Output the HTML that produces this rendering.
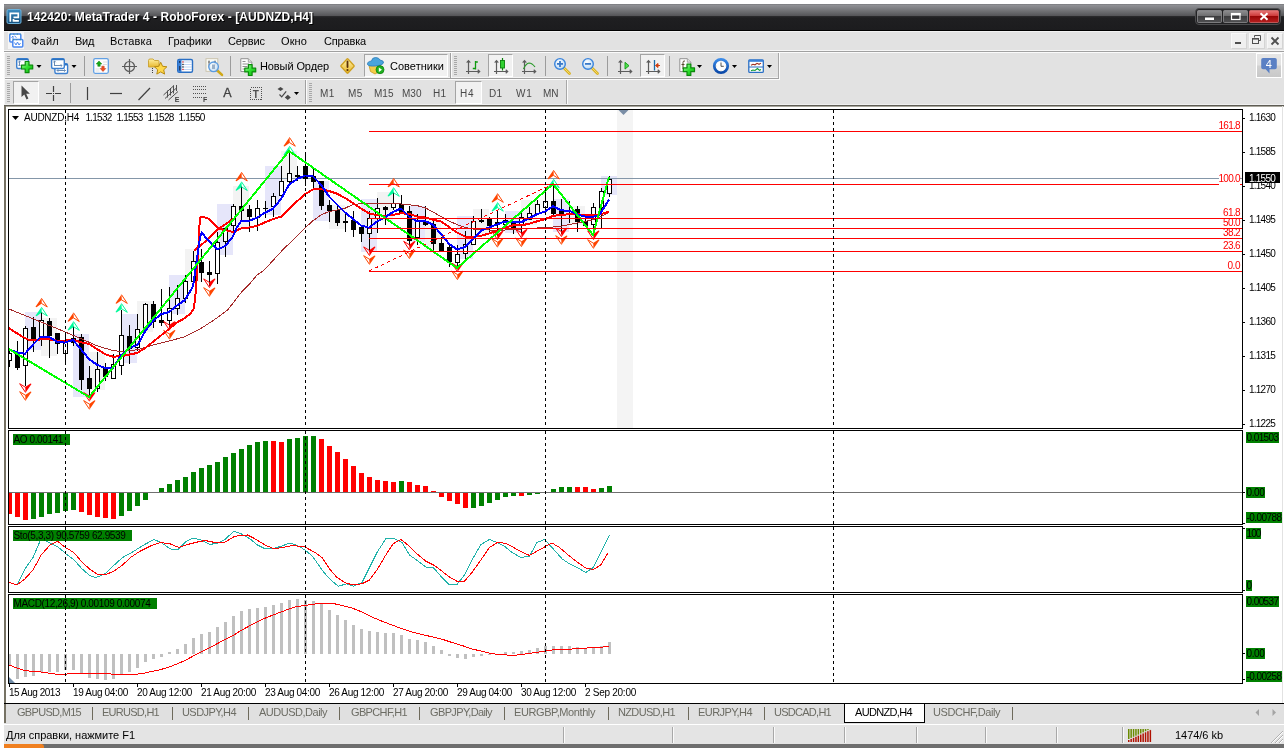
<!DOCTYPE html>
<html lang="ru">
<head>
<meta charset="utf-8">
<title>142420: MetaTrader 4 - RoboForex - [AUDNZD,H4]</title>
<style>
*{box-sizing:border-box;margin:0;padding:0}
html,body{width:1288px;height:748px;overflow:hidden;background:#fff}
body{font-family:"Liberation Sans","DejaVu Sans",sans-serif;font-size:11px;color:#000;position:relative}
#root{position:absolute;left:0;top:0;width:1288px;height:748px;overflow:hidden;will-change:transform}
.a{position:absolute}
.t{position:absolute;white-space:nowrap;z-index:2}
.g{z-index:2}
svg{position:absolute;left:0;top:0}
svg text{font-family:"Liberation Sans","DejaVu Sans",sans-serif}
</style>
</head>
<body>
<div id="root">
<div class="a" style="left:4px;top:4px;width:1280px;height:740px;background:#e2e2e2;"></div>
<div class="a" style="left:4px;top:4px;width:1280px;height:27px;background:linear-gradient(#7a7b7f 0px,#8e8f93 1.5px,#76777a 6px,#57575a 11.5px,#29292b 12.5px,#1f1f21 14px,#1c1c1e 26px,#000 26px,#000 27px)"></div>
<div class="a" style="left:4px;top:31px;width:1280px;height:1px;background:#f2f2f2;"></div>
<div class="a" style="left:4px;top:744px;width:1280px;height:4px;background:#6e6e6e;"></div>
<div class="a" style="left:4px;top:744px;width:40px;height:4px;background:#f08020;border-radius:0 3px 0 0"></div>
<div class="a" style="left:4px;top:50px;width:1280px;height:1px;background:#f6f6f6;"></div>
<div class="a" style="left:4px;top:51px;width:1280px;height:1px;background:#a0a0a0;"></div>
<div class="a" style="left:4px;top:52px;width:1280px;height:1px;background:#fbfbfb;"></div>
<div class="a" style="left:4px;top:77px;width:776px;height:1px;background:#f4f4f4;"></div>
<div class="a" style="left:4px;top:78px;width:775px;height:1px;background:#a0a0a0;"></div>
<div class="a" style="left:4px;top:79px;width:776px;height:1px;background:#fbfbfb;"></div>
<div class="a" style="left:4px;top:53px;width:1px;height:52px;background:#f6f6f6;"></div>
<div class="a" style="left:4px;top:104px;width:1280px;height:1px;background:#f0f0f0;"></div>
<div class="a" style="left:4px;top:105px;width:1280px;height:1px;background:#5e5c54;"></div>
<div class="a" style="left:4px;top:106px;width:1280px;height:597px;background:#ffffff;"></div>
<div class="a" style="left:4px;top:106px;width:1280px;height:1px;background:#a8a69c;"></div>
<div class="a" style="left:4px;top:106px;width:2px;height:597px;background:#767264;"></div>
<div class="a" style="left:1282px;top:106px;width:1px;height:597px;background:#e2e2e2;"></div>
<div class="a" style="left:4px;top:703px;width:1280px;height:1px;background:#000000;"></div>
<div class="a" style="left:4px;top:704px;width:1280px;height:20px;background:#e0e0e0;"></div>
<div class="a" style="left:4px;top:724px;width:1280px;height:1px;background:#ffffff;"></div>
<div class="a" style="left:4px;top:725px;width:1280px;height:19px;background:#e4e4e4;"></div>
<div class="t " style="left:27px;top:9.8px;font-size:12px;line-height:14px;color:#fff;font-weight:bold;letter-spacing:0.06px;text-shadow:1px 1px 0 #000;">142420: MetaTrader 4 - RoboForex - [AUDNZD,H4]</div>
<div class="a" style="left:8px;top:32px;width:16px;height:17px;background:#f5f5f5;"></div>
<div class="t " style="left:31px;top:34.7px;font-size:11px;line-height:13px;color:#000;letter-spacing:0.24px;">Файл</div>
<div class="t " style="left:75px;top:34.7px;font-size:11px;line-height:13px;color:#000;letter-spacing:-0.30px;">Вид</div>
<div class="t " style="left:110px;top:34.7px;font-size:11px;line-height:13px;color:#000;letter-spacing:0.16px;">Вставка</div>
<div class="t " style="left:168px;top:34.7px;font-size:11px;line-height:13px;color:#000;letter-spacing:0.04px;">Графики</div>
<div class="t " style="left:228px;top:34.7px;font-size:11px;line-height:13px;color:#000;letter-spacing:-0.11px;">Сервис</div>
<div class="t " style="left:281px;top:34.7px;font-size:11px;line-height:13px;color:#000;letter-spacing:0.11px;">Окно</div>
<div class="t " style="left:324px;top:34.7px;font-size:11px;line-height:13px;color:#000;letter-spacing:-0.17px;">Справка</div>
<div class="a" style="left:1231px;top:33px;width:16px;height:16px;background:#f0f0f0;border:1px solid #f8f8f8;border-right-color:#d4d4d4;border-bottom-color:#d4d4d4"></div>
<div class="a" style="left:1249px;top:33px;width:16px;height:16px;background:#f0f0f0;border:1px solid #f8f8f8;border-right-color:#d4d4d4;border-bottom-color:#d4d4d4"></div>
<div class="a" style="left:1267px;top:33px;width:16px;height:16px;background:#f0f0f0;border:1px solid #f8f8f8;border-right-color:#d4d4d4;border-bottom-color:#d4d4d4"></div>
<div class="a" style="left:7px;top:56px;width:3px;height:1px;background:#a8a8a8;"></div>
<div class="a" style="left:7px;top:58px;width:3px;height:1px;background:#a8a8a8;"></div>
<div class="a" style="left:7px;top:60px;width:3px;height:1px;background:#a8a8a8;"></div>
<div class="a" style="left:7px;top:62px;width:3px;height:1px;background:#a8a8a8;"></div>
<div class="a" style="left:7px;top:64px;width:3px;height:1px;background:#a8a8a8;"></div>
<div class="a" style="left:7px;top:66px;width:3px;height:1px;background:#a8a8a8;"></div>
<div class="a" style="left:7px;top:68px;width:3px;height:1px;background:#a8a8a8;"></div>
<div class="a" style="left:7px;top:70px;width:3px;height:1px;background:#a8a8a8;"></div>
<div class="a" style="left:7px;top:72px;width:3px;height:1px;background:#a8a8a8;"></div>
<div class="a" style="left:7px;top:74px;width:3px;height:1px;background:#a8a8a8;"></div>
<div class="a" style="left:7px;top:83px;width:3px;height:1px;background:#a8a8a8;"></div>
<div class="a" style="left:7px;top:85px;width:3px;height:1px;background:#a8a8a8;"></div>
<div class="a" style="left:7px;top:87px;width:3px;height:1px;background:#a8a8a8;"></div>
<div class="a" style="left:7px;top:89px;width:3px;height:1px;background:#a8a8a8;"></div>
<div class="a" style="left:7px;top:91px;width:3px;height:1px;background:#a8a8a8;"></div>
<div class="a" style="left:7px;top:93px;width:3px;height:1px;background:#a8a8a8;"></div>
<div class="a" style="left:7px;top:95px;width:3px;height:1px;background:#a8a8a8;"></div>
<div class="a" style="left:7px;top:97px;width:3px;height:1px;background:#a8a8a8;"></div>
<div class="a" style="left:7px;top:99px;width:3px;height:1px;background:#a8a8a8;"></div>
<div class="a" style="left:7px;top:101px;width:3px;height:1px;background:#a8a8a8;"></div>
<div class="a" style="left:778px;top:53px;width:1px;height:25px;background:#a8a8a8;"></div>
<div class="a" style="left:779px;top:53px;width:1px;height:26px;background:#fbfbfb;"></div>
<div class="a" style="left:566px;top:80px;width:1px;height:24px;background:#a8a8a8;"></div>
<div class="a" style="left:567px;top:80px;width:1px;height:24px;background:#fbfbfb;"></div>
<div class="a" style="left:84px;top:56px;width:1px;height:20px;background:#9c9c9c;"></div>
<div class="a" style="left:230px;top:56px;width:1px;height:20px;background:#9c9c9c;"></div>
<div class="a" style="left:450px;top:53px;width:1px;height:25px;background:#a0a0a0;"></div>
<div class="a" style="left:451px;top:53px;width:1px;height:25px;background:#fbfbfb;"></div>
<div class="a" style="left:454px;top:56px;width:3px;height:1px;background:#a8a8a8;"></div>
<div class="a" style="left:454px;top:58px;width:3px;height:1px;background:#a8a8a8;"></div>
<div class="a" style="left:454px;top:60px;width:3px;height:1px;background:#a8a8a8;"></div>
<div class="a" style="left:454px;top:62px;width:3px;height:1px;background:#a8a8a8;"></div>
<div class="a" style="left:454px;top:64px;width:3px;height:1px;background:#a8a8a8;"></div>
<div class="a" style="left:454px;top:66px;width:3px;height:1px;background:#a8a8a8;"></div>
<div class="a" style="left:454px;top:68px;width:3px;height:1px;background:#a8a8a8;"></div>
<div class="a" style="left:454px;top:70px;width:3px;height:1px;background:#a8a8a8;"></div>
<div class="a" style="left:454px;top:72px;width:3px;height:1px;background:#a8a8a8;"></div>
<div class="a" style="left:454px;top:74px;width:3px;height:1px;background:#a8a8a8;"></div>
<div class="a" style="left:545px;top:56px;width:1px;height:20px;background:#9c9c9c;"></div>
<div class="a" style="left:607px;top:56px;width:1px;height:20px;background:#9c9c9c;"></div>
<div class="a" style="left:669px;top:56px;width:1px;height:20px;background:#9c9c9c;"></div>
<div class="a" style="left:70px;top:83px;width:1px;height:20px;background:#9c9c9c;"></div>
<div class="a" style="left:305px;top:80px;width:1px;height:24px;background:#a0a0a0;"></div>
<div class="a" style="left:306px;top:80px;width:1px;height:24px;background:#fbfbfb;"></div>
<div class="a" style="left:309px;top:83px;width:3px;height:1px;background:#a8a8a8;"></div>
<div class="a" style="left:309px;top:85px;width:3px;height:1px;background:#a8a8a8;"></div>
<div class="a" style="left:309px;top:87px;width:3px;height:1px;background:#a8a8a8;"></div>
<div class="a" style="left:309px;top:89px;width:3px;height:1px;background:#a8a8a8;"></div>
<div class="a" style="left:309px;top:91px;width:3px;height:1px;background:#a8a8a8;"></div>
<div class="a" style="left:309px;top:93px;width:3px;height:1px;background:#a8a8a8;"></div>
<div class="a" style="left:309px;top:95px;width:3px;height:1px;background:#a8a8a8;"></div>
<div class="a" style="left:309px;top:97px;width:3px;height:1px;background:#a8a8a8;"></div>
<div class="a" style="left:309px;top:99px;width:3px;height:1px;background:#a8a8a8;"></div>
<div class="a" style="left:309px;top:101px;width:3px;height:1px;background:#a8a8a8;"></div>
<div class="a" style="left:364px;top:54px;width:84px;height:23px;background:#f1f1f1;border:1px solid #fff;border-left-color:#a4a4a4;border-top-color:#a4a4a4"></div>
<div class="a" style="left:488px;top:54px;width:25px;height:23px;background:#f1f1f1;border:1px solid #fff;border-left-color:#a4a4a4;border-top-color:#a4a4a4"></div>
<div class="a" style="left:640px;top:54px;width:25px;height:23px;background:#f1f1f1;border:1px solid #fff;border-left-color:#a4a4a4;border-top-color:#a4a4a4"></div>
<div class="a" style="left:13px;top:81px;width:26px;height:23px;background:#f1f1f1;border:1px solid #fff;border-left-color:#a4a4a4;border-top-color:#a4a4a4"></div>
<div class="a" style="left:455px;top:81px;width:27px;height:23px;background:#f1f1f1;border:1px solid #fff;border-left-color:#a4a4a4;border-top-color:#a4a4a4"></div>
<div class="t " style="left:260px;top:59.7px;font-size:11px;line-height:13px;color:#000;letter-spacing:-0.10px;">Новый Ордер</div>
<div class="t " style="left:390px;top:59.7px;font-size:11px;line-height:13px;color:#000;letter-spacing:0.03px;">Советники</div>
<div class="t " style="left:320px;top:88.3px;font-size:10px;line-height:12px;color:#484848;letter-spacing:0.30px;">M1</div>
<div class="t " style="left:348px;top:88.3px;font-size:10px;line-height:12px;color:#484848;letter-spacing:0.30px;">M5</div>
<div class="t " style="left:374px;top:88.3px;font-size:10px;line-height:12px;color:#484848;letter-spacing:0.02px;">M15</div>
<div class="t " style="left:402px;top:88.3px;font-size:10px;line-height:12px;color:#484848;letter-spacing:0.02px;">M30</div>
<div class="t " style="left:433px;top:88.3px;font-size:10px;line-height:12px;color:#484848;letter-spacing:0.36px;">H1</div>
<div class="t " style="left:460px;top:88.3px;font-size:10px;line-height:12px;color:#484848;letter-spacing:0.86px;">H4</div>
<div class="t " style="left:489px;top:88.3px;font-size:10px;line-height:12px;color:#484848;letter-spacing:0.36px;">D1</div>
<div class="t " style="left:516px;top:88.3px;font-size:10px;line-height:12px;color:#484848;letter-spacing:0.75px;">W1</div>
<div class="t " style="left:543px;top:88.3px;font-size:10px;line-height:12px;color:#484848;letter-spacing:-0.02px;">MN</div>
<div class="a" style="left:1256px;top:53px;width:26px;height:25px;border:1px solid #fff;background:linear-gradient(#e6e6e6 0,#e2e2e2 48%,#d2d2d2 52%,#c8c8c8 100%)"></div>
<div class="t " style="left:1265.7px;top:57.7px;font-size:11px;line-height:13px;color:#fff;">4</div>
<div class="t " style="left:174.8px;top:95.6px;font-size:7px;line-height:8px;color:#404040;font-weight:bold;">E</div>
<div class="t " style="left:203px;top:95.6px;font-size:7px;line-height:8px;color:#404040;font-weight:bold;">F</div>
<div class="t " style="left:223.3px;top:86.4px;font-size:12.5px;line-height:14px;color:#404040;-webkit-text-stroke:0.3px #404040;">A</div>
<div class="t " style="left:252.7px;top:88.5px;font-size:10px;line-height:12px;color:#505050;font-weight:bold;">T</div>
<div class="a" style="left:844px;top:704px;width:81px;height:19px;background:#ffffff;border:1px solid #000;border-top:none"></div>
<div class="t " style="left:17px;top:705.7px;font-size:11px;line-height:13px;color:#6c6c64;letter-spacing:-0.69px;">GBPUSD,M15</div>
<div class="t " style="left:102px;top:705.7px;font-size:11px;line-height:13px;color:#6c6c64;letter-spacing:-0.73px;">EURUSD,H1</div>
<div class="t " style="left:182px;top:705.7px;font-size:11px;line-height:13px;color:#6c6c64;letter-spacing:-0.57px;">USDJPY,H4</div>
<div class="t " style="left:259px;top:705.7px;font-size:11px;line-height:13px;color:#6c6c64;letter-spacing:-0.49px;">AUDUSD,Daily</div>
<div class="t " style="left:351px;top:705.7px;font-size:11px;line-height:13px;color:#6c6c64;letter-spacing:-0.64px;">GBPCHF,H1</div>
<div class="t " style="left:430px;top:705.7px;font-size:11px;line-height:13px;color:#6c6c64;letter-spacing:-0.63px;">GBPJPY,Daily</div>
<div class="t " style="left:514px;top:705.7px;font-size:11px;line-height:13px;color:#6c6c64;letter-spacing:-0.40px;">EURGBP,Monthly</div>
<div class="t " style="left:618px;top:705.7px;font-size:11px;line-height:13px;color:#6c6c64;letter-spacing:-0.66px;">NZDUSD,H1</div>
<div class="t " style="left:698px;top:705.7px;font-size:11px;line-height:13px;color:#6c6c64;letter-spacing:-0.57px;">EURJPY,H4</div>
<div class="t " style="left:774px;top:705.7px;font-size:11px;line-height:13px;color:#6c6c64;letter-spacing:-0.73px;">USDCAD,H1</div>
<div class="t " style="left:855px;top:705.7px;font-size:11px;line-height:13px;color:#000;letter-spacing:-0.66px;">AUDNZD,H4</div>
<div class="t " style="left:933px;top:705.7px;font-size:11px;line-height:13px;color:#6c6c64;letter-spacing:-0.42px;">USDCHF,Daily</div>
<div class="a" style="left:92px;top:707px;width:1px;height:13px;background:#6e6a5c;"></div>
<div class="a" style="left:172px;top:707px;width:1px;height:13px;background:#6e6a5c;"></div>
<div class="a" style="left:248px;top:707px;width:1px;height:13px;background:#6e6a5c;"></div>
<div class="a" style="left:339px;top:707px;width:1px;height:13px;background:#6e6a5c;"></div>
<div class="a" style="left:419px;top:707px;width:1px;height:13px;background:#6e6a5c;"></div>
<div class="a" style="left:504px;top:707px;width:1px;height:13px;background:#6e6a5c;"></div>
<div class="a" style="left:608px;top:707px;width:1px;height:13px;background:#6e6a5c;"></div>
<div class="a" style="left:688px;top:707px;width:1px;height:13px;background:#6e6a5c;"></div>
<div class="a" style="left:764px;top:707px;width:1px;height:13px;background:#6e6a5c;"></div>
<div class="a" style="left:1012px;top:707px;width:1px;height:13px;background:#6e6a5c;"></div>
<div class="a" style="left:4px;top:704px;width:2px;height:19px;background:#767264;"></div>
<div class="t " style="left:6px;top:728.7px;font-size:11px;line-height:13px;color:#000;letter-spacing:-0.03px;">Для справки, нажмите F1</div>
<div class="a" style="left:563px;top:727px;width:1px;height:16px;background:#a8a8a8;"></div>
<div class="a" style="left:564px;top:727px;width:1px;height:16px;background:#fafafa;"></div>
<div class="a" style="left:672px;top:727px;width:1px;height:16px;background:#a8a8a8;"></div>
<div class="a" style="left:673px;top:727px;width:1px;height:16px;background:#fafafa;"></div>
<div class="a" style="left:773px;top:727px;width:1px;height:16px;background:#a8a8a8;"></div>
<div class="a" style="left:774px;top:727px;width:1px;height:16px;background:#fafafa;"></div>
<div class="a" style="left:844px;top:727px;width:1px;height:16px;background:#a8a8a8;"></div>
<div class="a" style="left:845px;top:727px;width:1px;height:16px;background:#fafafa;"></div>
<div class="a" style="left:916px;top:727px;width:1px;height:16px;background:#a8a8a8;"></div>
<div class="a" style="left:917px;top:727px;width:1px;height:16px;background:#fafafa;"></div>
<div class="a" style="left:985px;top:727px;width:1px;height:16px;background:#a8a8a8;"></div>
<div class="a" style="left:986px;top:727px;width:1px;height:16px;background:#fafafa;"></div>
<div class="a" style="left:1056px;top:727px;width:1px;height:16px;background:#a8a8a8;"></div>
<div class="a" style="left:1057px;top:727px;width:1px;height:16px;background:#fafafa;"></div>
<div class="a" style="left:1122px;top:727px;width:1px;height:16px;background:#a8a8a8;"></div>
<div class="a" style="left:1123px;top:727px;width:1px;height:16px;background:#fafafa;"></div>
<div class="t " style="left:1175px;top:728.7px;font-size:11px;line-height:13px;color:#000;letter-spacing:-0.04px;">1474/6 kb</div>
<div class="t " style="left:24px;top:111.5px;font-size:10px;line-height:12px;color:#000;letter-spacing:-0.25px;">AUDNZD,H4</div>
<div class="t " style="left:85.5px;top:111.5px;font-size:10px;line-height:12px;color:#000;letter-spacing:-0.77px;">1.1532</div>
<div class="t " style="left:116.5px;top:111.5px;font-size:10px;line-height:12px;color:#000;letter-spacing:-0.77px;">1.1553</div>
<div class="t " style="left:147.5px;top:111.5px;font-size:10px;line-height:12px;color:#000;letter-spacing:-0.77px;">1.1528</div>
<div class="t " style="left:178.5px;top:111.5px;font-size:10px;line-height:12px;color:#000;letter-spacing:-0.77px;">1.1550</div>
<div class="t " style="left:1249px;top:112.3px;font-size:10px;line-height:12px;color:#000;letter-spacing:-0.77px;">1.1630</div>
<div class="t " style="left:1249px;top:146.3px;font-size:10px;line-height:12px;color:#000;letter-spacing:-0.77px;">1.1585</div>
<div class="t " style="left:1249px;top:180.3px;font-size:10px;line-height:12px;color:#000;letter-spacing:-0.77px;">1.1540</div>
<div class="t " style="left:1249px;top:214.3px;font-size:10px;line-height:12px;color:#000;letter-spacing:-0.77px;">1.1495</div>
<div class="t " style="left:1249px;top:248.3px;font-size:10px;line-height:12px;color:#000;letter-spacing:-0.77px;">1.1450</div>
<div class="t " style="left:1249px;top:282.3px;font-size:10px;line-height:12px;color:#000;letter-spacing:-0.77px;">1.1405</div>
<div class="t " style="left:1249px;top:316.3px;font-size:10px;line-height:12px;color:#000;letter-spacing:-0.77px;">1.1360</div>
<div class="t " style="left:1249px;top:350.3px;font-size:10px;line-height:12px;color:#000;letter-spacing:-0.77px;">1.1315</div>
<div class="t " style="left:1249px;top:384.3px;font-size:10px;line-height:12px;color:#000;letter-spacing:-0.77px;">1.1270</div>
<div class="t " style="left:1249px;top:418.3px;font-size:10px;line-height:12px;color:#000;letter-spacing:-0.77px;">1.1225</div>
<div class="a" style="left:1245px;top:172px;width:35px;height:11px;background:#000;z-index:2;"></div>
<div class="t " style="left:1249px;top:172.5px;font-size:10px;line-height:12px;color:#fff;letter-spacing:-0.77px;">1.1550</div>
<div class="t " style="left:1218.5px;top:119.5px;font-size:10px;line-height:12px;color:#ff0000;letter-spacing:-0.71px;">161.8</div>
<div class="t " style="left:1218.5px;top:172.5px;font-size:10px;line-height:12px;color:#ff0000;letter-spacing:-0.71px;background:#fff;">100.0</div>
<div class="t " style="left:1223px;top:206.5px;font-size:10px;line-height:12px;color:#ff0000;letter-spacing:-0.62px;">61.8</div>
<div class="t " style="left:1223px;top:216.5px;font-size:10px;line-height:12px;color:#ff0000;letter-spacing:-0.62px;">50.0</div>
<div class="t " style="left:1223px;top:226.5px;font-size:10px;line-height:12px;color:#ff0000;letter-spacing:-0.62px;">38.2</div>
<div class="t " style="left:1223px;top:239.5px;font-size:10px;line-height:12px;color:#ff0000;letter-spacing:-0.62px;">23.6</div>
<div class="t " style="left:1227.5px;top:259.5px;font-size:10px;line-height:12px;color:#ff0000;letter-spacing:-0.47px;">0.0</div>
<div class="a" style="left:13px;top:434px;width:57px;height:11px;background:#008000;z-index:2;"></div>
<div class="t " style="left:13.5px;top:433.5px;font-size:10px;line-height:12px;color:#000;letter-spacing:-0.39px;">AO 0.00141</div>
<div class="a" style="left:13px;top:530px;width:119px;height:11px;background:#008000;z-index:2;"></div>
<div class="t " style="left:13.5px;top:529.5px;font-size:10px;line-height:12px;color:#000;letter-spacing:-0.38px;">Sto(5,3,3) 90.5759 62.9539</div>
<div class="a" style="left:13px;top:598px;width:144px;height:11px;background:#008000;z-index:2;"></div>
<div class="t " style="left:13.5px;top:597.5px;font-size:10px;line-height:12px;color:#000;letter-spacing:-0.36px;">MACD(12,26,9) 0.00109 0.00074</div>
<div class="a" style="left:1246px;top:432px;width:33px;height:11px;background:#008000;z-index:2;"></div>
<div class="t " style="left:1246.5px;top:431.5px;font-size:10px;line-height:12px;color:#000;letter-spacing:-0.59px;">0.01503</div>
<div class="a" style="left:1246px;top:487px;width:19px;height:11px;background:#008000;z-index:2;"></div>
<div class="t " style="left:1246.5px;top:486.5px;font-size:10px;line-height:12px;color:#000;letter-spacing:-0.37px;">0.00</div>
<div class="a" style="left:1246px;top:512px;width:36px;height:11px;background:#008000;z-index:2;"></div>
<div class="t " style="left:1246.5px;top:511.5px;font-size:10px;line-height:12px;color:#000;letter-spacing:-0.56px;">-0.00788</div>
<div class="a" style="left:1246px;top:528px;width:15px;height:11px;background:#008000;z-index:2;"></div>
<div class="t " style="left:1246.5px;top:527.5px;font-size:10px;line-height:12px;color:#000;letter-spacing:-0.90px;">100</div>
<div class="a" style="left:1246px;top:580px;width:6px;height:11px;background:#008000;z-index:2;"></div>
<div class="t " style="left:1246.5px;top:579.5px;font-size:10px;line-height:12px;color:#000;letter-spacing:-0.56px;">0</div>
<div class="a" style="left:1246px;top:596px;width:33px;height:11px;background:#008000;z-index:2;"></div>
<div class="t " style="left:1246.5px;top:595.5px;font-size:10px;line-height:12px;color:#000;letter-spacing:-0.59px;">0.00537</div>
<div class="a" style="left:1246px;top:648px;width:19px;height:11px;background:#008000;z-index:2;"></div>
<div class="t " style="left:1246.5px;top:647.5px;font-size:10px;line-height:12px;color:#000;letter-spacing:-0.37px;">0.00</div>
<div class="a" style="left:1246px;top:671px;width:36px;height:11px;background:#008000;z-index:2;"></div>
<div class="t " style="left:1246.5px;top:670.5px;font-size:10px;line-height:12px;color:#000;letter-spacing:-0.56px;">-0.00258</div>
<div class="t " style="left:9px;top:686.5px;font-size:10px;line-height:12px;color:#000;letter-spacing:-0.47px;">15 Aug 2013</div>
<div class="t " style="left:73px;top:686.5px;font-size:10px;line-height:12px;color:#000;letter-spacing:-0.33px;">19 Aug 04:00</div>
<div class="t " style="left:137px;top:686.5px;font-size:10px;line-height:12px;color:#000;letter-spacing:-0.33px;">20 Aug 12:00</div>
<div class="t " style="left:201px;top:686.5px;font-size:10px;line-height:12px;color:#000;letter-spacing:-0.33px;">21 Aug 20:00</div>
<div class="t " style="left:265px;top:686.5px;font-size:10px;line-height:12px;color:#000;letter-spacing:-0.33px;">23 Aug 04:00</div>
<div class="t " style="left:329px;top:686.5px;font-size:10px;line-height:12px;color:#000;letter-spacing:-0.33px;">26 Aug 12:00</div>
<div class="t " style="left:393px;top:686.5px;font-size:10px;line-height:12px;color:#000;letter-spacing:-0.33px;">27 Aug 20:00</div>
<div class="t " style="left:457px;top:686.5px;font-size:10px;line-height:12px;color:#000;letter-spacing:-0.33px;">29 Aug 04:00</div>
<div class="t " style="left:521px;top:686.5px;font-size:10px;line-height:12px;color:#000;letter-spacing:-0.33px;">30 Aug 12:00</div>
<div class="t " style="left:585px;top:686.5px;font-size:10px;line-height:12px;color:#000;letter-spacing:-0.27px;">2 Sep 20:00</div>
<svg style="z-index:1" width="1288" height="748" viewBox="0 0 1288 748">
<defs><linearGradient id="gico" x1="0" y1="0" x2="0" y2="1"><stop offset="0" stop-color="#3a8cc0"/><stop offset="1" stop-color="#14507e"/></linearGradient></defs>
<rect x="7" y="9.500" width="14" height="14" rx="1.500" fill="url(#gico)" stroke="#6eb2da" stroke-width="1"/>
<path d="M10.300 21.800v-8.500h8v4h-4.800" fill="none" stroke="#fff" stroke-width="1.700"/><path d="M13.500 19v1.800h5.400" fill="none" stroke="#fff" stroke-width="1.700"/>
<rect x="1195.500" y="8.500" width="85" height="16" rx="3.500" fill="#222224" stroke="#4c4c4e"/>
<defs><linearGradient id="gb" x1="0" y1="0" x2="0" y2="1"><stop offset="0" stop-color="#8e8e90"/><stop offset="0.46" stop-color="#6c6c6e"/><stop offset="0.5" stop-color="#3c3c3e"/><stop offset="1" stop-color="#505052"/></linearGradient><linearGradient id="gr" x1="0" y1="0" x2="0" y2="1"><stop offset="0" stop-color="#e87878"/><stop offset="0.46" stop-color="#cc3838"/><stop offset="0.5" stop-color="#980606"/><stop offset="1" stop-color="#b82020"/></linearGradient></defs>
<rect x="1197.500" y="10.500" width="24" height="12" rx="1" fill="url(#gb)" stroke="#9a9a9c" stroke-width="0.700"/>
<rect x="1223.500" y="10.500" width="24" height="12" rx="1" fill="url(#gb)" stroke="#9a9a9c" stroke-width="0.700"/>
<rect x="1249.500" y="10.500" width="29" height="12" rx="1" fill="url(#gr)" stroke="#e07070" stroke-width="0.700"/>
<rect x="1205" y="17.500" width="9" height="2.500" fill="#fff"/>
<rect x="1231.500" y="13.500" width="8.500" height="6" fill="none" stroke="#fff" stroke-width="1.200"/><rect x="1231" y="13" width="9.500" height="2.200" fill="#fff"/>
<path d="M1260.500 13.300l7 6.500M1267.500 13.300l-7 6.500" stroke="#fff" stroke-width="2"/>
<g fill="#fff" stroke="#4a88f0" stroke-width="1.500"><rect x="9.800" y="34" width="11" height="8" rx="1"/><rect x="12.800" y="39.500" width="10" height="7.500" rx="1"/></g>
<path d="M9.800 34.200h11M12.800 39.700h10" stroke="#3c9a8a" stroke-width="1.200" stroke-dasharray="1 2.500"/>
<path d="M11.500 37.500l1.500-1.500v3M14.500 36l2 1.500" fill="none" stroke="#4a88f0" stroke-width="1"/>
<path d="M14.500 42.500l1.500 2.500 1.500-3 1.500 3 1.500-2" fill="none" stroke="#4a88f0" stroke-width="1"/>
<rect x="1235" y="42" width="6" height="2" fill="#505050"/>
<g fill="none" stroke="#505050"><path d="M1254.5 37.500v-2h6v5h-2"/><rect x="1252.500" y="38.500" width="6" height="5"/><path d="M1252 38.800h7" stroke-width="1.6"/></g>
<path d="M1271.500 37.500l7 7M1278.500 37.500l-7 7" stroke="#505050" stroke-width="1.800"/>
<path d="M36.5 65h5l-2.500 3z" fill="#000"/>
<path d="M71.5 65h5l-2.500 3z" fill="#000"/>
<path d="M697 65h5l-2.500 3z" fill="#000"/>
<path d="M732 65h5l-2.500 3z" fill="#000"/>
<path d="M767 65h5l-2.500 3z" fill="#000"/>
<path d="M294 92h5l-2.500 3z" fill="#000"/>
<defs><linearGradient id="gpl" x1="0" y1="0" x2="1" y2="1"><stop offset="0" stop-color="#b0ffb0"/><stop offset="0.5" stop-color="#30e030"/><stop offset="1" stop-color="#0cb00c"/></linearGradient><linearGradient id="gwin" x1="0" y1="0" x2="0" y2="1"><stop offset="0" stop-color="#2a72c0"/><stop offset="1" stop-color="#5a9ae0"/></linearGradient><linearGradient id="gyel" x1="0" y1="0" x2="0" y2="1"><stop offset="0" stop-color="#fff0a0"/><stop offset="1" stop-color="#e8b830"/></linearGradient><radialGradient id="glens" cx="0.4" cy="0.35" r="0.7"><stop offset="0" stop-color="#ffffff"/><stop offset="1" stop-color="#b8d8f4"/></radialGradient><linearGradient id="gclk" x1="0" y1="0" x2="0" y2="1"><stop offset="0" stop-color="#3a8ae8"/><stop offset="1" stop-color="#0a48a8"/></linearGradient></defs>
<rect x="16.7" y="58.7" width="11.6" height="9.8" rx="1.500" fill="#fff" stroke="#3b7fd0" stroke-width="1.400"/><rect x="16.7" y="58.7" width="11.6" height="1.6" rx="1" fill="#2a72c0"/>
<path d="M19.500 61v5M18.300 62.200l1.200-1.200 1.200 1.200M18.300 64.800l1.200 1.200 1.200-1.200" stroke="#6a8cb4" stroke-width="1" fill="none"/>
<path d="M25.2 61.5h3.8v3.7h3.7v3.8h-3.7v3.7h-3.8v-3.7h-3.7v-3.8h3.7z" fill="url(#gpl)" stroke="#0a8a0a" stroke-width="1.200" stroke-linejoin="round"/>
<rect x="54.9" y="63.8" width="12.7" height="9.7" rx="1.500" fill="#fff" stroke="#3b7fd0" stroke-width="1.400"/><rect x="54.9" y="63.8" width="12.7" height="1.6" rx="1" fill="#2a72c0"/>
<path d="M57 70.500h8.500M58.200 69.300l-1.200 1.200 1.200 1.200M64.300 69.300l1.200 1.200-1.200 1.200" stroke="#6a8cb4" stroke-width="1" fill="none"/>
<rect x="51.6" y="58.7" width="12.7" height="9.8" rx="1.500" fill="#fff" stroke="#3b7fd0" stroke-width="1.400"/><rect x="51.6" y="58.7" width="12.7" height="1.6" rx="1" fill="#2a72c0"/>
<path d="M54.500 61v5M53.300 62.200l1.200-1.200 1.200 1.200M54 65.500h8M60.800 64.300l1.200 1.200-1.200 1.200" stroke="#6a8cb4" stroke-width="1" fill="none"/>
<rect x="93.700" y="58.700" width="14.600" height="14.600" rx="1.500" fill="#fdfdfd" stroke="#62a0e4" stroke-width="1.300"/>
<path d="M103 62h4M103 64.500h4M95.500 69h4M95.500 71h4" stroke="#d8d8d8" stroke-width="0.800"/>
<path d="M99 61l2.800 3h-1.600v2.300h-2.400v-2.300h-1.600z" fill="#18a818" stroke="#0a800a" stroke-width="0.500"/>
<path d="M103 71.500l-2.800-3h1.600v-2.300h2.400v2.300h1.600z" fill="#f05020" stroke="#c03010" stroke-width="0.500"/>
<g stroke="#5a5a5a" fill="none" stroke-width="1.200"><circle cx="129.500" cy="66.500" r="5"/><path d="M129.500 59v15M122 66.500h15"/></g>
<path d="M148.500 60.500q0-1.500 1.500-1.500h3l1.500 1.500h3.500q1 0 1 1v5.500h-10.500z" fill="url(#gyel)" stroke="#c8a030" stroke-width="0.900"/>
<path d="M152.500 68v6" stroke="#404040" stroke-width="1" stroke-dasharray="1 1" shape-rendering="crispEdges"/>
<path d="M160.700 62.300l1.900 4 4.300.5-3.200 3 .9 4.300-3.900-2.200-3.900 2.200.9-4.300-3.200-3 4.300-.5z" fill="#ffd84a" stroke="#b88a10" stroke-width="1"/>
<rect x="177.700" y="59.500" width="14.800" height="12.800" rx="1.500" fill="#fff" stroke="#2a6fc4" stroke-width="1.400"/>
<rect x="178" y="60" width="3.500" height="12" fill="#3a80d8"/>
<path d="M182.500 62h9.500M182.500 64.500h9.500M182.500 67h9.500M182.500 69.500h9.500" stroke="#a8c4f0" stroke-width="0.700"/>
<rect x="179.300" y="61.200" width="1" height="1.500" fill="#000"/><rect x="179.200" y="66" width="1.200" height="4.500" fill="#203050"/>
<rect x="182.300" y="61.300" width="1.300" height="1.300" fill="#e02020"/><rect x="182.300" y="63.800" width="1.300" height="1.300" fill="#202020"/><rect x="182.300" y="66.300" width="1.300" height="1.300" fill="#202020"/><rect x="182.300" y="68.800" width="1.300" height="1.300" fill="#e02020"/>
<rect x="206" y="58.700" width="11.800" height="12.600" fill="#fbfbf6" stroke="#c8c0a8" stroke-width="0.900"/>
<path d="M209 60.500v7M208 62h2M215 60.500v5M214 62h2" stroke="#686868" stroke-width="0.900"/>
<path d="M217 70.300l5 4.600" stroke="#d0a818" stroke-width="2.600" stroke-linecap="round"/>
<circle cx="213.600" cy="66.800" r="4.800" fill="url(#glens)" fill-opacity="0.850" stroke="#5a9ae0" stroke-width="1.300"/>
<rect x="212" y="64.500" width="3" height="4.500" fill="#9ab0c8"/>
<path d="M240.8 58.7h7.5l3.500 3.500v9.3h-11z" fill="#fdfdfd" stroke="#8a8a8a" stroke-width="0.900"/><path d="M248.3 58.7v3.500h3.500" fill="#e0e0e0" stroke="#8a8a8a" stroke-width="0.700"/>
<path d="M242.500 61.500h3M242.500 64h6.500M242.500 66.500h5M242.500 69h3" stroke="#909090" stroke-width="1"/>
<path d="M248.4 64.6h3.7v3.6h3.6v3.7h-3.6v3.6h-3.7v-3.6h-3.6v-3.7h3.6z" fill="url(#gpl)" stroke="#0a8a0a" stroke-width="1.200" stroke-linejoin="round"/>
<path d="M347.500 59.500l6 6.500-6 6.500-6-6.500z" fill="url(#gyel)" stroke="#cfa020" stroke-width="2.600" stroke-linejoin="round"/><path d="M347.500 59.500l6 6.500-6 6.500-6-6.500z" fill="url(#gyel)"/>
<path d="M347.500 61.500v5.500" stroke="#5a3008" stroke-width="1.800" stroke-linecap="round"/><circle cx="347.500" cy="70" r="1.100" fill="#5a3008"/>
<path d="M369 65.500h12l-1.500 6l-4.500 2.500l-4.500-2.500z" fill="#f4cc48" stroke="#c89a20" stroke-width="0.800"/>
<path d="M367.500 64.500q-.5-3 4-3.500q.5-3.500 4-3.500t4.500 2.500q4 .5 3.500 3q-1 2.500-8 3t-8-1.500z" fill="#4aa4dc" stroke="#2a7ab8" stroke-width="0.800"/>
<circle cx="380" cy="69.700" r="4" fill="#1fb01f" stroke="#0a800a" stroke-width="0.800"/><path d="M378.800 67.500l3.200 2.200-3.200 2.200z" fill="#fff"/>
<g stroke="#5c5c5c" stroke-width="1.200" fill="none"><path d="M468.5 61.0v13M466.0 71.5h13.500"/><path d="M466.7 62.7l1.800-2 1.800 2M477.7 69.7l2 1.800-2 1.800"/></g>
<path d="M475.500 61v8.500M475.500 62h2.300M472.800 68.500h2.700" stroke="#109a10" stroke-width="1.300" fill="none"/>
<g stroke="#5c5c5c" stroke-width="1.200" fill="none"><path d="M496.5 61.0v13M494.0 71.5h13.500"/><path d="M494.7 62.7l1.800-2 1.800 2M505.7 69.7l2 1.800-2 1.800"/></g>
<path d="M502.500 58v12.500" stroke="#0a800a" stroke-width="1.200"/><rect x="500.500" y="60.500" width="4" height="7.500" fill="#30d030" stroke="#0a800a" stroke-width="0.900"/>
<g stroke="#5c5c5c" stroke-width="1.200" fill="none"><path d="M524.5 61.0v13M522.0 71.5h13.500"/><path d="M522.7 62.7l1.800-2 1.800 2M533.7 69.7l2 1.800-2 1.800"/></g>
<path d="M523.500 69q2.500-5.500 5.500-6q3 0 6 4" stroke="#2a9a2a" stroke-width="1.200" fill="none"/>
<path d="M564 67.9l5.500 5.500" stroke="#d8b020" stroke-width="2.800" stroke-linecap="round"/><path d="M564 67.9l5.500 5.500" stroke="#f8e070" stroke-width="1" stroke-linecap="round"/>
<circle cx="560" cy="63.9" r="5.300" fill="url(#glens)" stroke="#3a84dc" stroke-width="1.400"/>
<path d="M557 63.9h6" stroke="#3a7ac8" stroke-width="1.800"/>
<path d="M560 60.9v6" stroke="#3a7ac8" stroke-width="1.800"/>
<path d="M592 67.9l5.500 5.500" stroke="#d8b020" stroke-width="2.800" stroke-linecap="round"/><path d="M592 67.9l5.500 5.500" stroke="#f8e070" stroke-width="1" stroke-linecap="round"/>
<circle cx="588" cy="63.9" r="5.300" fill="url(#glens)" stroke="#3a84dc" stroke-width="1.400"/>
<path d="M585 63.9h6" stroke="#3a7ac8" stroke-width="1.800"/>
<g stroke="#5c5c5c" stroke-width="1.200" fill="none"><path d="M620.5 61.0v13M618.0 71.5h13.500"/><path d="M618.7 62.7l1.800-2 1.800 2M629.7 69.7l2 1.800-2 1.800"/></g>
<path d="M625 62.300l4 3.400-4 3.400z" fill="#50e050" stroke="#109a10" stroke-width="0.900"/>
<g stroke="#5c5c5c" stroke-width="1.200" fill="none"><path d="M648.5 61.0v13M646.0 71.5h13.500"/><path d="M646.7 62.7l1.800-2 1.800 2M657.7 69.7l2 1.800-2 1.800"/></g>
<path d="M654.500 60v10.500" stroke="#1a6aa8" stroke-width="1.300"/><path d="M660 65.500h-4M658 63.500l-2.500 2 2.500 2z" stroke="#d04010" stroke-width="1" fill="#d04010"/>
<path d="M679.8 58.7h7.5l3.500 3.500v9.3h-11z" fill="#fdfdfd" stroke="#8a8a8a" stroke-width="0.900"/><path d="M687.3 58.7v3.500h3.500" fill="#e0e0e0" stroke="#8a8a8a" stroke-width="0.700"/>
<path d="M685 61q-2-.5-2 1.500v6.500M681.500 64.500h3" stroke="#5a4a30" stroke-width="1" fill="none"/>
<path d="M687.0 64.2h3.8v3.7h3.7v3.8h-3.7v3.7h-3.8v-3.7h-3.7v-3.8h3.7z" fill="url(#gpl)" stroke="#0a8a0a" stroke-width="1.200" stroke-linejoin="round"/>
<circle cx="721" cy="66" r="6.700" fill="#fdfdfd" stroke="url(#gclk)" stroke-width="2.800"/>
<path d="M721 62.500v3.800h2.800" stroke="#404040" stroke-width="0.900" fill="none"/>
<g fill="#909090"><rect x="720.600" y="60.300" width=".8" height="1"/><rect x="720.600" y="70.700" width=".8" height="1"/><rect x="715.300" y="65.600" width="1" height=".8"/><rect x="725.700" y="65.600" width="1" height=".8"/></g>
<rect x="748.800" y="59.800" width="14.500" height="12.600" rx="1" fill="#fff" stroke="#2a6fc4" stroke-width="1.300"/><rect x="748.800" y="59.800" width="14.500" height="2" fill="#3a80d8"/><path d="M749 67h14" stroke="#2a6fc4" stroke-width="1"/>
<path d="M751 65.300l2-1 2 .5 2-1.500 2 1 2-1.200" stroke="#a03020" stroke-width="1.100" fill="none"/><path d="M751 70.800l2-.800 2 .5 2.500-2 2 1.800 1.500-.800" stroke="#109a30" stroke-width="1.100" fill="none"/>
<path d="M1263 58h12q1.800 0 1.800 1.800v7.600q0 1.800-1.800 1.800h-5.500v4.300l-3.800-4.300h-2.700q-1.800 0-1.800-1.800v-7.600q0-1.800 1.800-1.800z" fill="#5a80c4"/>
<path d="M21.500 85.500v11.500l2.800-2.600 2.200 5 1.900-.800-2.200-4.900h3.700z" fill="#484848"/>
<path d="M53.500 86v6M53.500 95v6M46 93.500h6M55 93.500h6" stroke="#404040" stroke-width="1.200"/><rect x="53" y="93" width="1" height="1" fill="#404040"/>
<path d="M87.500 87v13" stroke="#404040" stroke-width="1.200"/><path d="M110 93.500h12" stroke="#404040" stroke-width="1.200"/><path d="M138.500 100l11.500-12" stroke="#404040" stroke-width="1.200"/>
<g stroke="#505050" stroke-width="1" fill="none"><path d="M163.500 95l10.500-9.500M165 98.500l12-11M168.500 100l9.500-8.500"/><path d="M167.500 90.500v7M170.500 88v7.500M173.500 85.500v8M176.500 85v6"/></g>
<path d="M193 86.5h13" stroke="#505050" stroke-width="1" stroke-dasharray="1 1" shape-rendering="crispEdges"/>
<path d="M193 89.5h13" stroke="#505050" stroke-width="1" stroke-dasharray="1 1" shape-rendering="crispEdges"/>
<path d="M193 93.5h13" stroke="#505050" stroke-width="1" stroke-dasharray="1 1" shape-rendering="crispEdges"/>
<path d="M193 97.5h9" stroke="#505050" stroke-width="1" stroke-dasharray="1 1" shape-rendering="crispEdges"/>
<rect x="250.500" y="87.500" width="11" height="12" fill="none" stroke="#505050" stroke-width="1" stroke-dasharray="1 1" shape-rendering="crispEdges"/>
<path d="M280.500 87l3 2-3 2-3-2zM287.800 94.800l3 2.600-3 2.600-3-2.600z" fill="#484848"/><path d="M279.500 94.500l2.200 2.300 4.500-5.500" stroke="#484848" stroke-width="1.200" fill="none"/>
<path d="M1255.500 712.500l3.500-3.500v7z" fill="#a4a4a4"/><path d="M1272.500 709l3.500 3.500l-3.500 3.500z" fill="#a4a4a4"/>
<rect x="1128.0" y="729" width="1.500" height="10.0" fill="#6a8a00"/>
<rect x="1128.0" y="740.0" width="1.500" height="2.0" fill="#b01000"/>
<rect x="1130.4" y="729" width="1.500" height="8.9" fill="#6a8a00"/>
<rect x="1130.4" y="738.9" width="1.500" height="3.1" fill="#b01000"/>
<rect x="1132.8" y="729" width="1.500" height="7.8" fill="#6a8a00"/>
<rect x="1132.8" y="737.8" width="1.500" height="4.2" fill="#b01000"/>
<rect x="1135.2" y="729" width="1.500" height="6.7" fill="#6a8a00"/>
<rect x="1135.2" y="736.7" width="1.500" height="5.3" fill="#b01000"/>
<rect x="1137.6" y="729" width="1.500" height="5.6" fill="#6a8a00"/>
<rect x="1137.6" y="735.6" width="1.500" height="6.4" fill="#b01000"/>
<rect x="1140.0" y="729" width="1.500" height="4.5" fill="#6a8a00"/>
<rect x="1140.0" y="734.5" width="1.500" height="7.5" fill="#b01000"/>
<rect x="1142.4" y="729" width="1.500" height="3.4" fill="#6a8a00"/>
<rect x="1142.4" y="733.4" width="1.500" height="8.6" fill="#b01000"/>
<rect x="1144.8" y="729" width="1.500" height="2.3" fill="#6a8a00"/>
<rect x="1144.8" y="732.3" width="1.500" height="9.7" fill="#b01000"/>
<rect x="1147.2" y="729" width="1.500" height="1.2" fill="#6a8a00"/>
<rect x="1147.2" y="731.2" width="1.500" height="10.8" fill="#b01000"/>
<rect x="1149.6" y="729" width="1.500" height="0.1" fill="#6a8a00"/>
<rect x="1149.6" y="730.1" width="1.500" height="11.9" fill="#b01000"/>
<path d="M1271 743l12-12M1275 743l8-8M1279 743l4-4" stroke="#b0b0b0" stroke-width="1"/><path d="M1272 743l11-11M1276 743l7-7M1280 743l3-3" stroke="#fff" stroke-width="1"/>
<g shape-rendering="crispEdges">
<rect x="25" y="312" width="16" height="38" fill="#e6e6fa"/>
<rect x="41" y="318" width="16" height="38" fill="#f3f3f3"/>
<rect x="73" y="334" width="16" height="63" fill="#e6e6fa"/>
<rect x="89" y="352" width="16" height="38" fill="#f3f3f3"/>
<rect x="121" y="314" width="16" height="49" fill="#e6e6fa"/>
<rect x="137" y="301" width="16" height="31" fill="#f3f3f3"/>
<rect x="169" y="275" width="16" height="39" fill="#e6e6fa"/>
<rect x="185" y="249" width="16" height="33" fill="#f3f3f3"/>
<rect x="217" y="204" width="16" height="51" fill="#e6e6fa"/>
<rect x="233" y="186" width="16" height="42" fill="#f3f3f3"/>
<rect x="265" y="166" width="16" height="49" fill="#e6e6fa"/>
<rect x="281" y="151" width="16" height="30" fill="#f3f3f3"/>
<rect x="313" y="181" width="16" height="40" fill="#e6e6fa"/>
<rect x="329" y="205" width="16" height="24" fill="#f3f3f3"/>
<rect x="361" y="199" width="16" height="53" fill="#e6e6fa"/>
<rect x="377" y="192" width="16" height="29" fill="#f3f3f3"/>
<rect x="409" y="206" width="16" height="36" fill="#e6e6fa"/>
<rect x="425" y="218" width="16" height="32" fill="#f3f3f3"/>
<rect x="457" y="216" width="16" height="43" fill="#e6e6fa"/>
<rect x="473" y="209" width="16" height="25" fill="#f3f3f3"/>
<rect x="505" y="211" width="16" height="22" fill="#e6e6fa"/>
<rect x="521" y="200" width="16" height="25" fill="#f3f3f3"/>
<rect x="553" y="199" width="16" height="33" fill="#e6e6fa"/>
<rect x="569" y="206" width="16" height="19" fill="#f3f3f3"/>
<rect x="601" y="176" width="16" height="19" fill="#e6e6fa"/>
<rect x="617" y="110" width="16" height="318" fill="#f4f4f4"/>
<rect x="9" y="178" width="1233" height="1" fill="#8496a8"/>
</g>
<clipPath id="cm0"><rect x="9" y="110" width="1233" height="318"/></clipPath>
<g shape-rendering="crispEdges" clip-path="url(#cm0)">
<rect x="9" y="350" width="1" height="17" fill="#000"/>
<rect x="7" y="353" width="5" height="8" fill="#000"/><rect x="8" y="354" width="3" height="6" fill="#fff"/>
<rect x="17" y="341" width="1" height="29" fill="#000"/>
<rect x="15" y="354" width="5" height="14" fill="#000"/>
<rect x="25" y="326" width="1" height="60" fill="#000"/>
<rect x="23" y="328" width="5" height="38" fill="#000"/><rect x="24" y="329" width="3" height="36" fill="#fff"/>
<rect x="33" y="317" width="1" height="35" fill="#000"/>
<rect x="31" y="327" width="5" height="14" fill="#000"/>
<rect x="41" y="312" width="1" height="34" fill="#000"/>
<rect x="39" y="320" width="5" height="20" fill="#000"/><rect x="40" y="321" width="3" height="18" fill="#fff"/>
<rect x="49" y="318" width="1" height="40" fill="#000"/>
<rect x="47" y="321" width="5" height="15" fill="#000"/>
<rect x="57" y="333" width="1" height="21" fill="#000"/>
<rect x="55" y="333" width="5" height="11" fill="#000"/>
<rect x="65" y="334" width="1" height="30" fill="#000"/>
<rect x="63" y="342" width="5" height="12" fill="#000"/><rect x="64" y="343" width="3" height="10" fill="#fff"/>
<rect x="73" y="326" width="1" height="20" fill="#000"/>
<rect x="71" y="338" width="5" height="5" fill="#000"/>
<rect x="81" y="334" width="1" height="56" fill="#000"/>
<rect x="79" y="337" width="5" height="43" fill="#000"/>
<rect x="89" y="366" width="1" height="32" fill="#000"/>
<rect x="87" y="378" width="5" height="11" fill="#000"/>
<rect x="97" y="352" width="1" height="40" fill="#000"/>
<rect x="95" y="369" width="5" height="20" fill="#000"/><rect x="96" y="370" width="3" height="18" fill="#fff"/>
<rect x="105" y="363" width="1" height="18" fill="#000"/>
<rect x="103" y="368" width="5" height="9" fill="#000"/>
<rect x="113" y="354" width="1" height="25" fill="#000"/>
<rect x="111" y="364" width="5" height="15" fill="#000"/><rect x="112" y="365" width="3" height="13" fill="#fff"/>
<rect x="121" y="310" width="1" height="65" fill="#000"/>
<rect x="119" y="335" width="5" height="31" fill="#000"/><rect x="120" y="336" width="3" height="29" fill="#fff"/>
<rect x="129" y="325" width="1" height="39" fill="#000"/>
<rect x="127" y="336" width="5" height="13" fill="#000"/>
<rect x="137" y="314" width="1" height="37" fill="#000"/>
<rect x="135" y="329" width="5" height="19" fill="#000"/><rect x="136" y="330" width="3" height="17" fill="#fff"/>
<rect x="145" y="303" width="1" height="26" fill="#000"/>
<rect x="143" y="304" width="5" height="25" fill="#000"/><rect x="144" y="305" width="3" height="23" fill="#fff"/>
<rect x="153" y="301" width="1" height="27" fill="#000"/>
<rect x="151" y="304" width="5" height="18" fill="#000"/>
<rect x="161" y="289" width="1" height="37" fill="#000"/>
<rect x="159" y="320" width="5" height="3" fill="#000"/>
<rect x="169" y="287" width="1" height="40" fill="#000"/>
<rect x="167" y="308" width="5" height="13" fill="#000"/><rect x="168" y="309" width="3" height="11" fill="#fff"/>
<rect x="177" y="285" width="1" height="30" fill="#000"/>
<rect x="175" y="298" width="5" height="11" fill="#000"/><rect x="176" y="299" width="3" height="9" fill="#fff"/>
<rect x="185" y="275" width="1" height="28" fill="#000"/>
<rect x="183" y="281" width="5" height="18" fill="#000"/><rect x="184" y="282" width="3" height="16" fill="#fff"/>
<rect x="193" y="251" width="1" height="31" fill="#000"/>
<rect x="191" y="261" width="5" height="21" fill="#000"/><rect x="192" y="262" width="3" height="19" fill="#fff"/>
<rect x="201" y="249" width="1" height="33" fill="#000"/>
<rect x="199" y="262" width="5" height="11" fill="#000"/>
<rect x="209" y="261" width="1" height="25" fill="#000"/>
<rect x="207" y="272" width="5" height="3" fill="#000"/>
<rect x="217" y="232" width="1" height="52" fill="#000"/>
<rect x="215" y="242" width="5" height="32" fill="#000"/><rect x="216" y="243" width="3" height="30" fill="#fff"/>
<rect x="225" y="228" width="1" height="29" fill="#000"/>
<rect x="223" y="228" width="5" height="14" fill="#000"/><rect x="224" y="229" width="3" height="12" fill="#fff"/>
<rect x="233" y="204" width="1" height="29" fill="#000"/>
<rect x="231" y="206" width="5" height="20" fill="#000"/><rect x="232" y="207" width="3" height="18" fill="#fff"/>
<rect x="241" y="186" width="1" height="35" fill="#000"/>
<rect x="239" y="206" width="5" height="5" fill="#000"/>
<rect x="249" y="205" width="1" height="27" fill="#000"/>
<rect x="247" y="209" width="5" height="8" fill="#000"/>
<rect x="257" y="200" width="1" height="31" fill="#000"/>
<rect x="255" y="208" width="5" height="10" fill="#000"/><rect x="256" y="209" width="3" height="8" fill="#fff"/>
<rect x="265" y="201" width="1" height="17" fill="#000"/>
<rect x="263" y="208" width="5" height="1" fill="#000"/>
<rect x="273" y="193" width="1" height="24" fill="#000"/>
<rect x="271" y="196" width="5" height="11" fill="#000"/><rect x="272" y="197" width="3" height="9" fill="#fff"/>
<rect x="281" y="166" width="1" height="34" fill="#000"/>
<rect x="279" y="181" width="5" height="15" fill="#000"/><rect x="280" y="182" width="3" height="13" fill="#fff"/>
<rect x="289" y="152" width="1" height="32" fill="#000"/>
<rect x="287" y="173" width="5" height="9" fill="#000"/><rect x="288" y="174" width="3" height="7" fill="#fff"/>
<rect x="297" y="166" width="1" height="15" fill="#000"/>
<rect x="295" y="175" width="5" height="2" fill="#000"/>
<rect x="305" y="152" width="1" height="34" fill="#000"/>
<rect x="303" y="166" width="5" height="13" fill="#000"/>
<rect x="313" y="169" width="1" height="21" fill="#000"/>
<rect x="311" y="176" width="5" height="6" fill="#000"/>
<rect x="321" y="181" width="1" height="29" fill="#000"/>
<rect x="319" y="181" width="5" height="25" fill="#000"/>
<rect x="329" y="200" width="1" height="22" fill="#000"/>
<rect x="327" y="205" width="5" height="6" fill="#000"/>
<rect x="337" y="205" width="1" height="21" fill="#000"/>
<rect x="335" y="210" width="5" height="13" fill="#000"/>
<rect x="345" y="214" width="1" height="18" fill="#000"/>
<rect x="343" y="221" width="5" height="2" fill="#000"/>
<rect x="353" y="211" width="1" height="26" fill="#000"/>
<rect x="351" y="220" width="5" height="10" fill="#000"/>
<rect x="361" y="227" width="1" height="15" fill="#000"/>
<rect x="359" y="227" width="5" height="7" fill="#000"/>
<rect x="369" y="211" width="1" height="40" fill="#000"/>
<rect x="367" y="218" width="5" height="16" fill="#000"/><rect x="368" y="219" width="3" height="14" fill="#fff"/>
<rect x="377" y="198" width="1" height="35" fill="#000"/>
<rect x="375" y="208" width="5" height="11" fill="#000"/><rect x="376" y="209" width="3" height="9" fill="#fff"/>
<rect x="385" y="206" width="1" height="19" fill="#000"/>
<rect x="383" y="207" width="5" height="3" fill="#000"/>
<rect x="393" y="192" width="1" height="18" fill="#000"/>
<rect x="391" y="203" width="5" height="5" fill="#000"/><rect x="392" y="204" width="3" height="3" fill="#fff"/>
<rect x="401" y="195" width="1" height="19" fill="#000"/>
<rect x="399" y="204" width="5" height="10" fill="#000"/>
<rect x="409" y="206" width="1" height="40" fill="#000"/>
<rect x="407" y="211" width="5" height="30" fill="#000"/>
<rect x="417" y="214" width="1" height="31" fill="#000"/>
<rect x="415" y="221" width="5" height="17" fill="#000"/><rect x="416" y="222" width="3" height="15" fill="#fff"/>
<rect x="425" y="206" width="1" height="20" fill="#000"/>
<rect x="423" y="221" width="5" height="4" fill="#000"/>
<rect x="433" y="220" width="1" height="30" fill="#000"/>
<rect x="431" y="224" width="5" height="20" fill="#000"/>
<rect x="441" y="237" width="1" height="14" fill="#000"/>
<rect x="439" y="243" width="5" height="8" fill="#000"/>
<rect x="449" y="245" width="1" height="22" fill="#000"/>
<rect x="447" y="247" width="5" height="15" fill="#000"/>
<rect x="457" y="245" width="1" height="22" fill="#000"/>
<rect x="455" y="254" width="5" height="9" fill="#000"/><rect x="456" y="255" width="3" height="7" fill="#fff"/>
<rect x="465" y="231" width="1" height="29" fill="#000"/>
<rect x="463" y="244" width="5" height="10" fill="#000"/><rect x="464" y="245" width="3" height="8" fill="#fff"/>
<rect x="473" y="216" width="1" height="29" fill="#000"/>
<rect x="471" y="221" width="5" height="24" fill="#000"/><rect x="472" y="222" width="3" height="22" fill="#fff"/>
<rect x="481" y="209" width="1" height="14" fill="#000"/>
<rect x="479" y="220" width="5" height="2" fill="#000"/>
<rect x="489" y="217" width="1" height="17" fill="#000"/>
<rect x="487" y="219" width="5" height="7" fill="#000"/>
<rect x="497" y="210" width="1" height="26" fill="#000"/>
<rect x="495" y="222" width="5" height="2" fill="#000"/>
<rect x="505" y="214" width="1" height="14" fill="#000"/>
<rect x="503" y="220" width="5" height="5" fill="#000"/><rect x="504" y="221" width="3" height="3" fill="#fff"/>
<rect x="513" y="221" width="1" height="13" fill="#000"/>
<rect x="511" y="221" width="5" height="7" fill="#000"/>
<rect x="521" y="213" width="1" height="21" fill="#000"/>
<rect x="519" y="217" width="5" height="9" fill="#000"/><rect x="520" y="218" width="3" height="7" fill="#fff"/>
<rect x="529" y="207" width="1" height="13" fill="#000"/>
<rect x="527" y="213" width="5" height="7" fill="#000"/><rect x="528" y="214" width="3" height="5" fill="#fff"/>
<rect x="537" y="200" width="1" height="15" fill="#000"/>
<rect x="535" y="204" width="5" height="10" fill="#000"/><rect x="536" y="205" width="3" height="8" fill="#fff"/>
<rect x="545" y="187" width="1" height="27" fill="#000"/>
<rect x="543" y="201" width="5" height="7" fill="#000"/><rect x="544" y="202" width="3" height="5" fill="#fff"/>
<rect x="553" y="186" width="1" height="29" fill="#000"/>
<rect x="551" y="201" width="5" height="13" fill="#000"/>
<rect x="561" y="199" width="1" height="35" fill="#000"/>
<rect x="559" y="211" width="5" height="4" fill="#000"/>
<rect x="569" y="201" width="1" height="22" fill="#000"/>
<rect x="567" y="213" width="5" height="2" fill="#000"/>
<rect x="577" y="206" width="1" height="26" fill="#000"/>
<rect x="575" y="209" width="5" height="13" fill="#000"/>
<rect x="585" y="215" width="1" height="11" fill="#000"/>
<rect x="583" y="221" width="5" height="5" fill="#000"/>
<rect x="593" y="203" width="1" height="32" fill="#000"/>
<rect x="591" y="207" width="5" height="18" fill="#000"/><rect x="592" y="208" width="3" height="16" fill="#fff"/>
<rect x="601" y="188" width="1" height="41" fill="#000"/>
<rect x="599" y="191" width="5" height="17" fill="#000"/><rect x="600" y="192" width="3" height="15" fill="#fff"/>
<rect x="609" y="176" width="1" height="21" fill="#000"/>
<rect x="607" y="179" width="5" height="15" fill="#000"/><rect x="608" y="180" width="3" height="13" fill="#fff"/>
</g>
<path d="M41.5 298L35.5 306.8L36.5 307.3L41.8 303.6z" fill="#ff4500"/><path d="M41.5 298.3L47.3 307L41.5 303.4" fill="none" stroke="#ff4500" stroke-width="1"/>
<path d="M41.5 307L35.5 315.8L36.5 316.3L41.8 312.6z" fill="#00fa9a"/><path d="M41.5 307.3L47.3 316L41.5 312.4" fill="none" stroke="#00fa9a" stroke-width="1"/>
<path d="M73.5 312.5L67.5 321.3L68.5 321.8L73.8 318.1z" fill="#ff4500"/><path d="M73.5 312.8L79.3 321.5L73.5 317.9" fill="none" stroke="#ff4500" stroke-width="1"/>
<path d="M73.5 321.3L67.5 330.1L68.5 330.6L73.8 326.90000000000003z" fill="#00fa9a"/><path d="M73.5 321.6L79.3 330.3L73.5 326.7" fill="none" stroke="#00fa9a" stroke-width="1"/>
<path d="M121.5 294.4L115.5 303.2L116.5 303.7L121.8 300.0z" fill="#ff4500"/><path d="M121.5 294.7L127.3 303.4L121.5 299.79999999999995" fill="none" stroke="#ff4500" stroke-width="1"/>
<path d="M121.5 303.3L115.5 312.1L116.5 312.6L121.8 308.90000000000003z" fill="#00fa9a"/><path d="M121.5 303.6L127.3 312.3L121.5 308.7" fill="none" stroke="#00fa9a" stroke-width="1"/>
<path d="M241.5 172L235.5 180.8L236.5 181.3L241.8 177.6z" fill="#ff4500"/><path d="M241.5 172.3L247.3 181L241.5 177.4" fill="none" stroke="#ff4500" stroke-width="1"/>
<path d="M241.5 181.5L235.5 190.3L236.5 190.8L241.8 187.1z" fill="#00fa9a"/><path d="M241.5 181.8L247.3 190.5L241.5 186.9" fill="none" stroke="#00fa9a" stroke-width="1"/>
<path d="M289.5 137.2L283.5 146.0L284.5 146.5L289.8 142.79999999999998z" fill="#ff4500"/><path d="M289.5 137.5L295.3 146.2L289.5 142.6" fill="none" stroke="#ff4500" stroke-width="1"/>
<path d="M289.5 146L283.5 154.8L284.5 155.3L289.8 151.6z" fill="#00fa9a"/><path d="M289.5 146.3L295.3 155L289.5 151.4" fill="none" stroke="#00fa9a" stroke-width="1"/>
<path d="M393.5 178L387.5 186.8L388.5 187.3L393.8 183.6z" fill="#ff4500"/><path d="M393.5 178.3L399.3 187L393.5 183.4" fill="none" stroke="#ff4500" stroke-width="1"/>
<path d="M393.5 187.3L387.5 196.10000000000002L388.5 196.60000000000002L393.8 192.9z" fill="#00fa9a"/><path d="M393.5 187.60000000000002L399.3 196.3L393.5 192.70000000000002" fill="none" stroke="#00fa9a" stroke-width="1"/>
<path d="M497.5 193.3L491.5 202.10000000000002L492.5 202.60000000000002L497.8 198.9z" fill="#ff4500"/><path d="M497.5 193.60000000000002L503.3 202.3L497.5 198.70000000000002" fill="none" stroke="#ff4500" stroke-width="1"/>
<path d="M497.5 202.2L491.5 211.0L492.5 211.5L497.8 207.79999999999998z" fill="#00fa9a"/><path d="M497.5 202.5L503.3 211.2L497.5 207.6" fill="none" stroke="#00fa9a" stroke-width="1"/>
<path d="M553.5 170L547.5 178.8L548.5 179.3L553.8 175.6z" fill="#ff4500"/><path d="M553.5 170.3L559.3 179L553.5 175.4" fill="none" stroke="#ff4500" stroke-width="1"/>
<path d="M553.5 178.9L547.5 187.70000000000002L548.5 188.20000000000002L553.8 184.5z" fill="#00fa9a"/><path d="M553.5 179.20000000000002L559.3 187.9L553.5 184.3" fill="none" stroke="#00fa9a" stroke-width="1"/>
<path d="M25.5 392.7L31.5 383.9L30.5 383.4L25.2 387.09999999999997z" fill="#ff0000"/><path d="M25.5 392.4L19.7 383.7L25.5 387.3" fill="none" stroke="#ff0000" stroke-width="1"/>
<path d="M25.5 400.7L31.5 391.9L30.5 391.4L25.2 395.09999999999997z" fill="#ff4500"/><path d="M25.5 400.4L19.7 391.7L25.5 395.3" fill="none" stroke="#ff4500" stroke-width="1"/>
<path d="M89.5 401.5L95.5 392.7L94.5 392.2L89.2 395.9z" fill="#ff0000"/><path d="M89.5 401.2L83.7 392.5L89.5 396.1" fill="none" stroke="#ff0000" stroke-width="1"/>
<path d="M89.5 409.6L95.5 400.8L94.5 400.3L89.2 404.0z" fill="#ff4500"/><path d="M89.5 409.3L83.7 400.6L89.5 404.20000000000005" fill="none" stroke="#ff4500" stroke-width="1"/>
<path d="M169.5 330.5L175.5 321.7L174.5 321.2L169.2 324.9z" fill="#ff0000"/><path d="M169.5 330.2L163.7 321.5L169.5 325.1" fill="none" stroke="#ff0000" stroke-width="1"/>
<path d="M169.5 339.4L175.5 330.59999999999997L174.5 330.09999999999997L169.2 333.79999999999995z" fill="#ff4500"/><path d="M169.5 339.09999999999997L163.7 330.4L169.5 334.0" fill="none" stroke="#ff4500" stroke-width="1"/>
<path d="M209.5 287.9L215.5 279.09999999999997L214.5 278.59999999999997L209.2 282.29999999999995z" fill="#ff0000"/><path d="M209.5 287.59999999999997L203.7 278.9L209.5 282.5" fill="none" stroke="#ff0000" stroke-width="1"/>
<path d="M209.5 296.7L215.5 287.9L214.5 287.4L209.2 291.09999999999997z" fill="#ff4500"/><path d="M209.5 296.4L203.7 287.7L209.5 291.3" fill="none" stroke="#ff4500" stroke-width="1"/>
<path d="M369.5 255.9L375.5 247.1L374.5 246.6L369.2 250.3z" fill="#ff0000"/><path d="M369.5 255.6L363.7 246.9L369.5 250.5" fill="none" stroke="#ff0000" stroke-width="1"/>
<path d="M369.5 264.7L375.5 255.89999999999998L374.5 255.39999999999998L369.2 259.09999999999997z" fill="#ff4500"/><path d="M369.5 264.4L363.7 255.7L369.5 259.3" fill="none" stroke="#ff4500" stroke-width="1"/>
<path d="M409.5 250.3L415.5 241.5L414.5 241.0L409.2 244.70000000000002z" fill="#ff0000"/><path d="M409.5 250.0L403.7 241.3L409.5 244.9" fill="none" stroke="#ff0000" stroke-width="1"/>
<path d="M409.5 259L415.5 250.2L414.5 249.7L409.2 253.4z" fill="#ff4500"/><path d="M409.5 258.7L403.7 250L409.5 253.6" fill="none" stroke="#ff4500" stroke-width="1"/>
<path d="M457.5 272L463.5 263.2L462.5 262.7L457.2 266.4z" fill="#ff0000"/><path d="M457.5 271.7L451.7 263L457.5 266.6" fill="none" stroke="#ff0000" stroke-width="1"/>
<path d="M457.5 280L463.5 271.2L462.5 270.7L457.2 274.4z" fill="#ff4500"/><path d="M457.5 279.7L451.7 271L457.5 274.6" fill="none" stroke="#ff4500" stroke-width="1"/>
<path d="M497.5 240L503.5 231.2L502.5 230.7L497.2 234.4z" fill="#ff0000"/><path d="M497.5 239.7L491.7 231L497.5 234.6" fill="none" stroke="#ff0000" stroke-width="1"/>
<path d="M497.5 247.5L503.5 238.7L502.5 238.2L497.2 241.9z" fill="#ff4500"/><path d="M497.5 247.2L491.7 238.5L497.5 242.1" fill="none" stroke="#ff4500" stroke-width="1"/>
<path d="M521.5 238.3L527.5 229.5L526.5 229.0L521.2 232.70000000000002z" fill="#ff0000"/><path d="M521.5 238.0L515.7 229.3L521.5 232.9" fill="none" stroke="#ff0000" stroke-width="1"/>
<path d="M521.5 247L527.5 238.2L526.5 237.7L521.2 241.4z" fill="#ff4500"/><path d="M521.5 246.7L515.7 238L521.5 241.6" fill="none" stroke="#ff4500" stroke-width="1"/>
<path d="M561.5 237L567.5 228.2L566.5 227.7L561.2 231.4z" fill="#ff0000"/><path d="M561.5 236.7L555.7 228L561.5 231.6" fill="none" stroke="#ff0000" stroke-width="1"/>
<path d="M561.5 244.7L567.5 235.89999999999998L566.5 235.39999999999998L561.2 239.1z" fill="#ff4500"/><path d="M561.5 244.39999999999998L555.7 235.7L561.5 239.29999999999998" fill="none" stroke="#ff4500" stroke-width="1"/>
<path d="M593.5 239.9L599.5 231.1L598.5 230.6L593.2 234.3z" fill="#ff0000"/><path d="M593.5 239.6L587.7 230.9L593.5 234.5" fill="none" stroke="#ff0000" stroke-width="1"/>
<path d="M593.5 248.7L599.5 239.89999999999998L598.5 239.39999999999998L593.2 243.1z" fill="#ff4500"/><path d="M593.5 248.39999999999998L587.7 239.7L593.5 243.29999999999998" fill="none" stroke="#ff4500" stroke-width="1"/>
<clipPath id="cm"><rect x="9" y="110" width="1233" height="318"/></clipPath><g clip-path="url(#cm)">
<path d="M9.0 309.0L57.0 328.5L84.0 340.0L97.0 345.8L113.0 350.6L121.0 351.4L137.0 349.8L153.0 345.0L169.0 341.0L184.0 337.0L200.0 329.0L214.0 320.0L228.0 309.6L241.0 292.7L249.0 284.7L257.0 275.0L264.0 270.3L283.0 249.6L297.0 236.0L305.0 228.0L313.0 220.7L321.0 215.0L329.0 211.5L337.0 210.0L344.0 208.7L353.0 204.5L369.0 203.0L385.0 203.0L401.0 204.0L417.0 205.6L425.0 207.7L433.0 212.0L441.0 216.5L449.0 221.0L457.0 224.6L465.0 227.5L473.0 229.0L489.0 230.0L505.0 230.0L521.0 229.0L537.0 228.0L545.0 227.8L561.0 226.2L577.0 223.0L593.0 219.8L601.0 216.6L609.0 212.6" fill="none" stroke="#a52a2a" stroke-width="1" stroke-linejoin="round" shape-rendering="crispEdges" />
<path d="M193.7 250.7L198.5 247.0L201.7 244.6L209.0 238.2L217.0 230.1L225.0 224.5L233.0 218.9" fill="none" stroke="#ff0000" stroke-width="2" stroke-linejoin="round" shape-rendering="crispEdges" />
<path d="M9.0 328.2L17.0 333.3L25.0 338.2L29.0 339.8L33.0 340.0L41.0 339.4L49.0 339.4L57.0 340.6L65.0 340.6L73.0 340.0L81.0 342.2L89.0 344.0L97.0 349.0L105.0 354.2L113.0 356.7L121.0 356.2L129.0 354.6L137.0 353.0L145.0 348.2L153.0 341.8L161.0 335.4L169.0 329.0L177.0 322.5L185.0 318.0L191.0 313.0L194.0 308.0L196.0 290.0L198.0 255.0L199.5 225.0L200.5 217.3L202.0 216.5L209.0 218.9L217.0 227.2L219.4 228.8L225.0 230.1L233.0 232.0L241.0 228.5L249.0 227.5L257.0 225.9L265.0 222.3L273.0 219.0L281.0 216.7L289.0 208.7L297.0 201.4L305.0 194.2L313.0 189.4L321.0 189.0L329.0 191.0L337.0 193.7L345.0 198.0L353.0 203.0L361.0 208.5L369.0 213.3L377.0 215.3L385.0 215.7L393.0 215.0L401.0 213.3L409.0 213.8L417.0 216.5L425.0 217.4L433.0 219.8L441.0 221.4L449.0 227.0L457.0 232.6L465.0 236.6L473.0 237.0L481.0 235.8L489.0 233.5L497.0 231.0L505.0 227.8L513.0 225.4L521.0 225.4L529.0 223.8L537.0 221.4L545.0 219.2L553.0 215.8L561.0 215.0L569.0 214.2L577.0 214.2L585.0 215.0L593.0 215.0L601.0 214.2L609.0 211.8" fill="none" stroke="#ff0000" stroke-width="2" stroke-linejoin="round" shape-rendering="crispEdges" />
<path d="M9.0 349.4L17.0 352.3L25.0 353.7L33.0 344.6L41.0 336.5L49.0 336.9L57.0 341.7L65.0 342.6L73.0 340.0L81.0 349.4L89.0 359.0L97.0 364.8L105.0 368.0L113.0 368.0L121.0 355.4L129.0 348.2L137.0 345.0L140.0 341.0L145.0 331.4L153.0 321.0L161.0 314.2L169.0 312.1L177.0 305.5L185.0 300.0L193.0 286.3L197.0 259.0L200.0 238.0L201.7 232.5L209.0 241.4L217.0 249.4L225.0 246.2L233.0 236.5L237.0 227.0L241.0 221.3L249.0 220.8L257.0 217.7L265.0 212.7L273.0 208.7L281.0 199.0L289.0 184.6L297.0 179.0L305.0 175.7L313.0 176.5L321.0 184.6L329.0 196.5L337.0 204.5L345.0 212.5L353.0 219.0L361.0 225.4L369.0 227.8L377.0 221.4L385.0 217.4L393.0 212.0L401.0 208.5L409.0 216.5L417.0 221.5L425.0 221.0L433.0 224.6L441.0 234.2L449.0 243.8L457.0 249.5L465.0 247.0L473.0 239.0L481.0 230.7L489.0 227.4L497.0 224.4L505.0 221.5L513.0 222.2L521.0 222.2L529.0 218.2L537.0 214.2L545.0 211.4L553.0 206.2L561.0 210.4L569.0 210.7L577.0 214.2L585.0 216.6L593.0 216.6L598.6 215.8L601.0 212.6L609.0 199.8" fill="none" stroke="#0000ff" stroke-width="2" stroke-linejoin="round" shape-rendering="crispEdges" />
<path d="M1.0 344.3L89.0 397.0L289.0 151.0L457.0 268.0L553.0 184.0L593.0 235.0L609.0 177.0" fill="none" stroke="#00ff00" stroke-width="2" stroke-linejoin="round" shape-rendering="crispEdges" stroke-linejoin="miter"/>
</g>
<g shape-rendering="crispEdges">
<rect x="369" y="131" width="873" height="1" fill="#ff0000"/>
<rect x="369" y="184" width="873" height="1" fill="#ff0000"/>
<rect x="369" y="218" width="873" height="1" fill="#ff0000"/>
<rect x="369" y="228" width="873" height="1" fill="#ff0000"/>
<rect x="369" y="238" width="873" height="1" fill="#ff0000"/>
<rect x="369" y="251" width="873" height="1" fill="#ff0000"/>
<rect x="369" y="271" width="873" height="1" fill="#ff0000"/>
</g>
<path d="M369 271L553 184" stroke="#ff0000" stroke-width="1" stroke-dasharray="3.300 3.400" fill="none" shape-rendering="crispEdges"/>
<g shape-rendering="crispEdges">
<clipPath id="ca"><rect x="9" y="431" width="1233" height="93"/></clipPath><g clip-path="url(#ca)">
<rect x="7" y="492" width="5" height="22" fill="#ff0000"/>
<rect x="15" y="492" width="5" height="25" fill="#ff0000"/>
<rect x="23" y="492" width="5" height="28" fill="#ff0000"/>
<rect x="31" y="492" width="5" height="27" fill="#008000"/>
<rect x="39" y="492" width="5" height="25" fill="#008000"/>
<rect x="47" y="492" width="5" height="22" fill="#008000"/>
<rect x="55" y="492" width="5" height="21" fill="#008000"/>
<rect x="63" y="492" width="5" height="19" fill="#008000"/>
<rect x="71" y="492" width="5" height="18" fill="#008000"/>
<rect x="79" y="492" width="5" height="20" fill="#ff0000"/>
<rect x="87" y="492" width="5" height="23" fill="#ff0000"/>
<rect x="95" y="492" width="5" height="25" fill="#ff0000"/>
<rect x="103" y="492" width="5" height="26" fill="#ff0000"/>
<rect x="111" y="492" width="5" height="27" fill="#ff0000"/>
<rect x="119" y="492" width="5" height="24" fill="#008000"/>
<rect x="127" y="492" width="5" height="19" fill="#008000"/>
<rect x="135" y="492" width="5" height="14" fill="#008000"/>
<rect x="143" y="492" width="5" height="8" fill="#008000"/>
<rect x="151" y="492" width="5" height="1" fill="#008000"/>
<rect x="159" y="488" width="5" height="4" fill="#008000"/>
<rect x="167" y="484" width="5" height="8" fill="#008000"/>
<rect x="175" y="480" width="5" height="12" fill="#008000"/>
<rect x="183" y="477" width="5" height="15" fill="#008000"/>
<rect x="191" y="472" width="5" height="20" fill="#008000"/>
<rect x="199" y="468" width="5" height="24" fill="#008000"/>
<rect x="207" y="465" width="5" height="27" fill="#008000"/>
<rect x="215" y="462" width="5" height="30" fill="#008000"/>
<rect x="223" y="457" width="5" height="35" fill="#008000"/>
<rect x="231" y="453" width="5" height="39" fill="#008000"/>
<rect x="239" y="449" width="5" height="43" fill="#008000"/>
<rect x="247" y="445" width="5" height="47" fill="#008000"/>
<rect x="255" y="442" width="5" height="50" fill="#008000"/>
<rect x="263" y="441" width="5" height="51" fill="#008000"/>
<rect x="271" y="441" width="5" height="51" fill="#ff0000"/>
<rect x="279" y="442" width="5" height="50" fill="#ff0000"/>
<rect x="287" y="439" width="5" height="53" fill="#008000"/>
<rect x="295" y="438" width="5" height="54" fill="#008000"/>
<rect x="303" y="436" width="5" height="56" fill="#008000"/>
<rect x="311" y="436" width="5" height="56" fill="#008000"/>
<rect x="319" y="439" width="5" height="53" fill="#ff0000"/>
<rect x="327" y="446" width="5" height="46" fill="#ff0000"/>
<rect x="335" y="452" width="5" height="40" fill="#ff0000"/>
<rect x="343" y="459" width="5" height="33" fill="#ff0000"/>
<rect x="351" y="466" width="5" height="26" fill="#ff0000"/>
<rect x="359" y="473" width="5" height="19" fill="#ff0000"/>
<rect x="367" y="477" width="5" height="15" fill="#ff0000"/>
<rect x="375" y="480" width="5" height="12" fill="#ff0000"/>
<rect x="383" y="481" width="5" height="11" fill="#ff0000"/>
<rect x="391" y="482" width="5" height="10" fill="#ff0000"/>
<rect x="399" y="481" width="5" height="11" fill="#008000"/>
<rect x="407" y="482" width="5" height="10" fill="#ff0000"/>
<rect x="415" y="485" width="5" height="7" fill="#ff0000"/>
<rect x="423" y="486" width="5" height="6" fill="#ff0000"/>
<rect x="431" y="491" width="5" height="1" fill="#ff0000"/>
<rect x="439" y="492" width="5" height="5" fill="#ff0000"/>
<rect x="447" y="492" width="5" height="9" fill="#ff0000"/>
<rect x="455" y="492" width="5" height="12" fill="#ff0000"/>
<rect x="463" y="492" width="5" height="16" fill="#ff0000"/>
<rect x="471" y="492" width="5" height="16" fill="#008000"/>
<rect x="479" y="492" width="5" height="14" fill="#008000"/>
<rect x="487" y="492" width="5" height="11" fill="#008000"/>
<rect x="495" y="492" width="5" height="8" fill="#008000"/>
<rect x="503" y="492" width="5" height="5" fill="#008000"/>
<rect x="511" y="492" width="5" height="4" fill="#008000"/>
<rect x="519" y="492" width="5" height="4" fill="#ff0000"/>
<rect x="527" y="492" width="5" height="3" fill="#008000"/>
<rect x="535" y="492" width="5" height="2" fill="#008000"/>
<rect x="543" y="492" width="5" height="1" fill="#008000"/>
<rect x="551" y="489" width="5" height="3" fill="#008000"/>
<rect x="559" y="487" width="5" height="5" fill="#008000"/>
<rect x="567" y="487" width="5" height="5" fill="#008000"/>
<rect x="575" y="487" width="5" height="5" fill="#ff0000"/>
<rect x="583" y="487" width="5" height="5" fill="#ff0000"/>
<rect x="591" y="489" width="5" height="3" fill="#ff0000"/>
<rect x="599" y="488" width="5" height="4" fill="#008000"/>
<rect x="607" y="486" width="5" height="6" fill="#008000"/>
</g>
<rect x="9" y="492" width="1236" height="1" fill="#707070"/>
</g>
<path d="M9.0 582.5L17.0 585.0L25.0 568.8L33.0 557.5L40.0 541.2L43.8 538.8L46.2 541.2L58.0 547.0L66.0 553.8L74.0 560.0L82.0 568.8L90.0 575.8L96.2 577.5L105.0 573.8L113.0 566.2L122.5 557.5L132.5 552.0L143.8 545.0L153.8 539.5L161.2 542.5L170.0 548.8L177.5 550.0L186.2 541.2L193.8 538.0L202.5 540.5L210.0 544.5L217.5 543.0L225.0 539.5L233.8 531.2L241.2 533.8L250.0 538.8L257.5 545.0L265.0 548.8L272.5 548.8L281.2 546.2L290.0 543.0L297.5 545.5L305.0 550.0L312.5 556.2L322.0 570.0L329.5 578.8L338.2 586.2L347.0 583.8L353.2 586.2L362.0 582.5L369.5 567.5L377.0 552.5L385.8 538.8L394.5 538.8L402.0 542.5L409.5 555.0L418.2 561.2L425.8 567.0L433.2 567.5L442.0 577.5L449.5 585.0L457.0 584.5L464.5 575.0L472.0 560.0L480.8 544.5L489.5 539.5L497.0 542.5L504.5 546.2L512.0 552.5L520.8 557.5L529.5 556.2L537.0 542.5L544.5 539.5L552.0 547.5L562.0 558.8L569.5 563.8L577.0 567.5L585.8 572.5L593.2 567.5L602.0 550.0L609.5 535.0" fill="none" stroke="#20b2aa" stroke-width="1" stroke-linejoin="round" shape-rendering="crispEdges" />
<path d="M9.0 582.5L17.0 585.0L25.0 578.8L33.0 570.0L41.2 555.0L50.0 545.0L57.5 541.2L65.5 547.5L73.8 552.5L82.0 562.0L90.0 569.5L98.0 574.5L105.0 575.0L113.8 571.2L122.5 565.0L131.2 557.0L140.0 551.2L150.0 546.2L160.0 542.5L170.0 543.8L178.8 547.5L187.5 544.5L197.5 542.0L205.0 540.5L215.0 542.5L225.0 542.0L235.0 536.2L247.5 535.0L255.0 538.8L265.0 545.0L273.8 548.8L282.5 547.5L292.5 545.5L305.0 547.0L315.0 552.5L322.0 557.5L329.5 568.8L337.0 577.5L345.8 583.0L353.2 585.0L362.0 583.8L369.5 580.0L377.0 570.0L385.8 555.0L393.2 543.8L400.8 539.5L409.5 546.2L417.0 553.8L425.8 561.2L434.5 565.5L442.0 571.2L449.5 577.0L458.2 582.0L464.5 581.2L472.0 572.5L480.8 560.0L489.5 547.5L498.2 542.0L507.0 543.8L514.5 548.0L522.0 552.0L529.5 555.5L537.0 551.2L544.5 547.0L552.0 543.0L559.5 547.5L568.2 555.0L577.0 562.0L585.8 568.0L593.2 569.5L600.8 565.0L608.2 552.5" fill="none" stroke="#ff0000" stroke-width="1" stroke-linejoin="round" shape-rendering="crispEdges" />
<g shape-rendering="crispEdges">
<rect x="8" y="654" width="3" height="11" fill="#c0c0c0"/>
<rect x="16" y="654" width="3" height="25" fill="#c0c0c0"/>
<rect x="24" y="654" width="3" height="23" fill="#c0c0c0"/>
<rect x="32" y="654" width="3" height="22" fill="#c0c0c0"/>
<rect x="40" y="654" width="3" height="18" fill="#c0c0c0"/>
<rect x="48" y="654" width="3" height="18" fill="#c0c0c0"/>
<rect x="56" y="654" width="3" height="18" fill="#c0c0c0"/>
<rect x="64" y="654" width="3" height="16" fill="#c0c0c0"/>
<rect x="72" y="654" width="3" height="16" fill="#c0c0c0"/>
<rect x="80" y="654" width="3" height="20" fill="#c0c0c0"/>
<rect x="88" y="654" width="3" height="24" fill="#c0c0c0"/>
<rect x="96" y="654" width="3" height="25" fill="#c0c0c0"/>
<rect x="104" y="654" width="3" height="26" fill="#c0c0c0"/>
<rect x="112" y="654" width="3" height="25" fill="#c0c0c0"/>
<rect x="120" y="654" width="3" height="20" fill="#c0c0c0"/>
<rect x="128" y="654" width="3" height="18" fill="#c0c0c0"/>
<rect x="136" y="654" width="3" height="14" fill="#c0c0c0"/>
<rect x="144" y="654" width="3" height="8" fill="#c0c0c0"/>
<rect x="152" y="654" width="3" height="5" fill="#c0c0c0"/>
<rect x="160" y="654" width="3" height="3" fill="#c0c0c0"/>
<rect x="168" y="652" width="3" height="2" fill="#c0c0c0"/>
<rect x="176" y="649" width="3" height="5" fill="#c0c0c0"/>
<rect x="184" y="644" width="3" height="10" fill="#c0c0c0"/>
<rect x="192" y="638" width="3" height="16" fill="#c0c0c0"/>
<rect x="200" y="634" width="3" height="20" fill="#c0c0c0"/>
<rect x="208" y="632" width="3" height="22" fill="#c0c0c0"/>
<rect x="216" y="627" width="3" height="27" fill="#c0c0c0"/>
<rect x="224" y="622" width="3" height="32" fill="#c0c0c0"/>
<rect x="232" y="616" width="3" height="38" fill="#c0c0c0"/>
<rect x="240" y="611" width="3" height="43" fill="#c0c0c0"/>
<rect x="248" y="609" width="3" height="45" fill="#c0c0c0"/>
<rect x="256" y="608" width="3" height="46" fill="#c0c0c0"/>
<rect x="264" y="607" width="3" height="47" fill="#c0c0c0"/>
<rect x="272" y="605" width="3" height="49" fill="#c0c0c0"/>
<rect x="280" y="603" width="3" height="51" fill="#c0c0c0"/>
<rect x="288" y="600" width="3" height="54" fill="#c0c0c0"/>
<rect x="296" y="599" width="3" height="55" fill="#c0c0c0"/>
<rect x="304" y="600" width="3" height="54" fill="#c0c0c0"/>
<rect x="312" y="601" width="3" height="53" fill="#c0c0c0"/>
<rect x="320" y="603" width="3" height="51" fill="#c0c0c0"/>
<rect x="328" y="610" width="3" height="44" fill="#c0c0c0"/>
<rect x="336" y="615" width="3" height="39" fill="#c0c0c0"/>
<rect x="344" y="620" width="3" height="34" fill="#c0c0c0"/>
<rect x="352" y="625" width="3" height="29" fill="#c0c0c0"/>
<rect x="360" y="629" width="3" height="25" fill="#c0c0c0"/>
<rect x="368" y="631" width="3" height="23" fill="#c0c0c0"/>
<rect x="376" y="632" width="3" height="22" fill="#c0c0c0"/>
<rect x="384" y="633" width="3" height="21" fill="#c0c0c0"/>
<rect x="392" y="633" width="3" height="21" fill="#c0c0c0"/>
<rect x="400" y="635" width="3" height="19" fill="#c0c0c0"/>
<rect x="408" y="639" width="3" height="15" fill="#c0c0c0"/>
<rect x="416" y="640" width="3" height="14" fill="#c0c0c0"/>
<rect x="424" y="642" width="3" height="12" fill="#c0c0c0"/>
<rect x="432" y="646" width="3" height="8" fill="#c0c0c0"/>
<rect x="440" y="650" width="3" height="4" fill="#c0c0c0"/>
<rect x="448" y="654" width="3" height="2" fill="#c0c0c0"/>
<rect x="456" y="654" width="3" height="4" fill="#c0c0c0"/>
<rect x="464" y="654" width="3" height="5" fill="#c0c0c0"/>
<rect x="472" y="654" width="3" height="3" fill="#c0c0c0"/>
<rect x="480" y="654" width="3" height="2" fill="#c0c0c0"/>
<rect x="488" y="654" width="3" height="1" fill="#c0c0c0"/>
<rect x="504" y="652" width="3" height="2" fill="#c0c0c0"/>
<rect x="512" y="652" width="3" height="2" fill="#c0c0c0"/>
<rect x="520" y="651" width="3" height="3" fill="#c0c0c0"/>
<rect x="528" y="650" width="3" height="4" fill="#c0c0c0"/>
<rect x="536" y="648" width="3" height="6" fill="#c0c0c0"/>
<rect x="544" y="646" width="3" height="8" fill="#c0c0c0"/>
<rect x="552" y="646" width="3" height="8" fill="#c0c0c0"/>
<rect x="560" y="646" width="3" height="8" fill="#c0c0c0"/>
<rect x="568" y="646" width="3" height="8" fill="#c0c0c0"/>
<rect x="576" y="647" width="3" height="7" fill="#c0c0c0"/>
<rect x="584" y="648" width="3" height="6" fill="#c0c0c0"/>
<rect x="592" y="648" width="3" height="6" fill="#c0c0c0"/>
<rect x="600" y="646" width="3" height="8" fill="#c0c0c0"/>
<rect x="608" y="642" width="3" height="12" fill="#c0c0c0"/>
</g>
<path d="M9.0 665.0L17.0 668.0L25.0 670.5L33.0 671.5L41.0 672.0L49.0 673.2L57.0 674.2L65.0 674.2L73.0 673.2L81.0 673.2L89.0 673.2L97.0 673.2L105.0 673.2L113.0 674.2L121.0 674.2L129.0 674.2L137.0 674.2L145.0 673.0L153.0 671.2L161.0 669.5L169.0 667.0L177.0 664.0L185.0 660.5L193.0 656.2L201.0 652.0L209.0 648.0L217.0 643.8L225.0 639.5L233.0 635.5L241.0 630.5L249.0 626.2L257.0 622.0L265.0 618.2L273.0 615.0L281.0 612.0L289.0 609.0L297.0 606.5L305.0 605.5L313.0 604.2L321.0 603.2L332.0 603.2L340.0 605.0L352.0 608.0L362.0 612.0L372.0 617.0L382.0 621.2L392.0 625.0L402.0 628.8L412.0 632.0L422.0 634.5L432.0 636.8L442.0 639.2L452.0 642.5L462.0 645.5L472.0 649.0L482.0 651.2L492.0 653.8L502.0 654.5L512.0 655.5L522.0 654.5L532.0 653.0L542.0 651.5L552.0 650.0L562.0 649.5L572.0 649.0L582.0 648.2L592.0 647.8L602.0 647.2L609.0 646.2" fill="none" stroke="#ff0000" stroke-width="1" stroke-linejoin="round" shape-rendering="crispEdges" />
</svg>
<svg style="z-index:3" width="1288" height="748" viewBox="0 0 1288 748">
<g shape-rendering="crispEdges">
<rect x="8" y="109" width="1235" height="1" fill="#000"/><rect x="8" y="428" width="1235" height="1" fill="#000"/><rect x="8" y="109" width="1" height="320" fill="#000"/><rect x="1242" y="109" width="1" height="320" fill="#000"/>
<rect x="8" y="430" width="1235" height="1" fill="#000"/><rect x="8" y="524" width="1235" height="1" fill="#000"/><rect x="8" y="430" width="1" height="95" fill="#000"/><rect x="1242" y="430" width="1" height="95" fill="#000"/>
<rect x="8" y="526" width="1235" height="1" fill="#000"/><rect x="8" y="592" width="1235" height="1" fill="#000"/><rect x="8" y="526" width="1" height="67" fill="#000"/><rect x="1242" y="526" width="1" height="67" fill="#000"/>
<rect x="8" y="594" width="1235" height="1" fill="#000"/><rect x="8" y="683" width="1235" height="1" fill="#000"/><rect x="8" y="594" width="1" height="90" fill="#000"/><rect x="1242" y="594" width="1" height="90" fill="#000"/>
<path d="M65.5 110V428" stroke="#000" stroke-width="1" stroke-dasharray="3 3" fill="none"/>
<path d="M65.5 431V524" stroke="#000" stroke-width="1" stroke-dasharray="3 3" fill="none"/>
<path d="M65.5 527V592" stroke="#000" stroke-width="1" stroke-dasharray="3 3" fill="none"/>
<path d="M65.5 595V683" stroke="#000" stroke-width="1" stroke-dasharray="3 3" fill="none"/>
<path d="M305.5 110V428" stroke="#000" stroke-width="1" stroke-dasharray="3 3" fill="none"/>
<path d="M305.5 431V524" stroke="#000" stroke-width="1" stroke-dasharray="3 3" fill="none"/>
<path d="M305.5 527V592" stroke="#000" stroke-width="1" stroke-dasharray="3 3" fill="none"/>
<path d="M305.5 595V683" stroke="#000" stroke-width="1" stroke-dasharray="3 3" fill="none"/>
<path d="M545.5 110V428" stroke="#000" stroke-width="1" stroke-dasharray="3 3" fill="none"/>
<path d="M545.5 431V524" stroke="#000" stroke-width="1" stroke-dasharray="3 3" fill="none"/>
<path d="M545.5 527V592" stroke="#000" stroke-width="1" stroke-dasharray="3 3" fill="none"/>
<path d="M545.5 595V683" stroke="#000" stroke-width="1" stroke-dasharray="3 3" fill="none"/>
<path d="M833.5 110V428" stroke="#000" stroke-width="1" stroke-dasharray="3 3" fill="none"/>
<path d="M833.5 431V524" stroke="#000" stroke-width="1" stroke-dasharray="3 3" fill="none"/>
<path d="M833.5 527V592" stroke="#000" stroke-width="1" stroke-dasharray="3 3" fill="none"/>
<path d="M833.5 595V683" stroke="#000" stroke-width="1" stroke-dasharray="3 3" fill="none"/>
<rect x="1243" y="118" width="2" height="1" fill="#000"/>
<rect x="1243" y="152" width="2" height="1" fill="#000"/>
<rect x="1243" y="186" width="2" height="1" fill="#000"/>
<rect x="1243" y="220" width="2" height="1" fill="#000"/>
<rect x="1243" y="254" width="2" height="1" fill="#000"/>
<rect x="1243" y="288" width="2" height="1" fill="#000"/>
<rect x="1243" y="322" width="2" height="1" fill="#000"/>
<rect x="1243" y="356" width="2" height="1" fill="#000"/>
<rect x="1243" y="390" width="2" height="1" fill="#000"/>
<rect x="1243" y="424" width="2" height="1" fill="#000"/>
<rect x="1243" y="492" width="2" height="1" fill="#000"/><rect x="1243" y="653" width="2" height="1" fill="#000"/>
<rect x="1243" y="523" width="2" height="1" fill="#000"/>
<rect x="1243" y="528" width="2" height="1" fill="#000"/>
<rect x="1243" y="590" width="2" height="1" fill="#000"/>
<rect x="1243" y="679" width="2" height="1" fill="#000"/>
<rect x="9" y="684" width="1" height="3" fill="#000"/>
<rect x="73" y="684" width="1" height="3" fill="#000"/>
<rect x="137" y="684" width="1" height="3" fill="#000"/>
<rect x="201" y="684" width="1" height="3" fill="#000"/>
<rect x="265" y="684" width="1" height="3" fill="#000"/>
<rect x="329" y="684" width="1" height="3" fill="#000"/>
<rect x="393" y="684" width="1" height="3" fill="#000"/>
<rect x="457" y="684" width="1" height="3" fill="#000"/>
<rect x="521" y="684" width="1" height="3" fill="#000"/>
<rect x="585" y="684" width="1" height="3" fill="#000"/>
</g>
<path d="M618.500 110h10l-5 5z" fill="#7a8ea6"/>
<path d="M9 677v6h6z" fill="#6e8aa6"/>
<path d="M12 116h7l-3.500 4z" fill="#000"/>
</svg>
</div>
</body>
</html>
